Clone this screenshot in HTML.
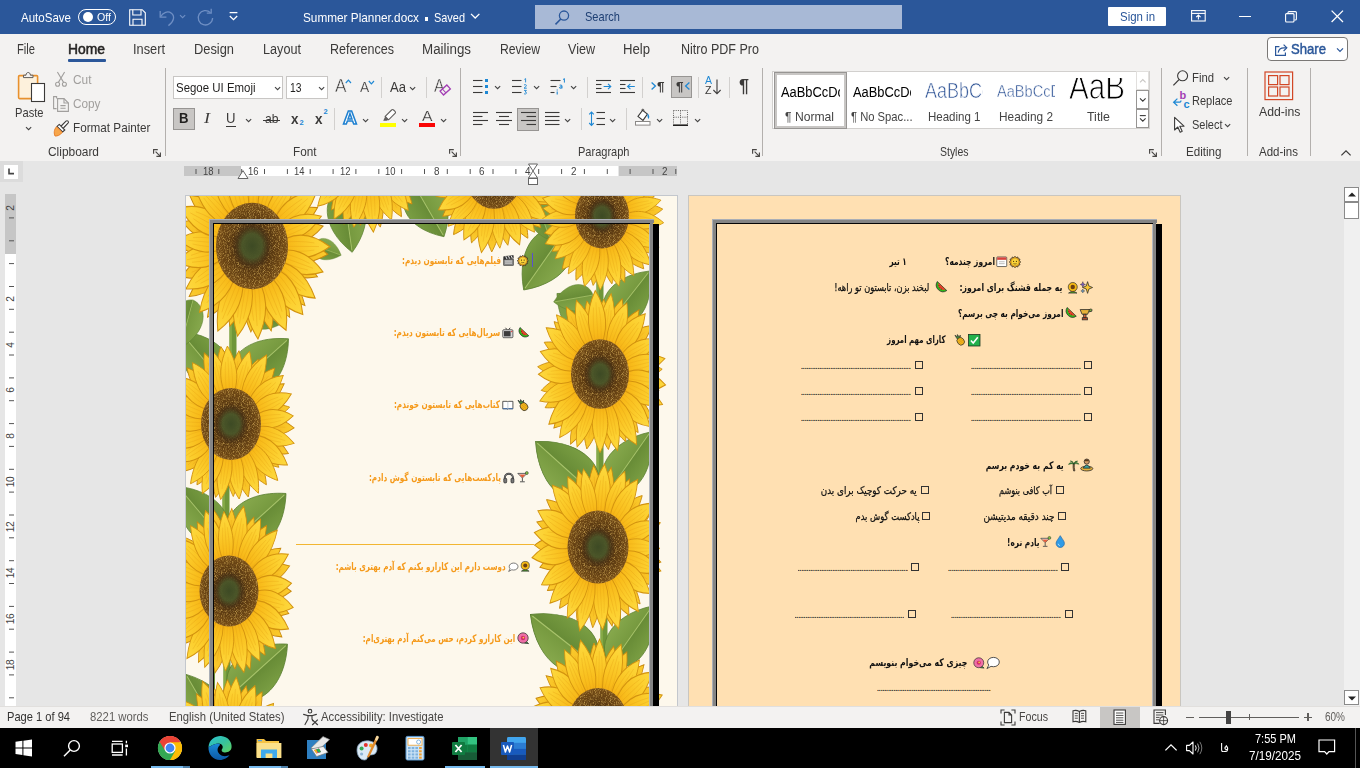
<!DOCTYPE html>
<html lang="en"><head><meta charset="utf-8"><title>Summer Planner.docx - Word</title>
<style>
html,body{margin:0;padding:0;background:#e6e6e6;}
body{width:1360px;height:768px;overflow:hidden;position:relative;font-family:"Liberation Sans","DejaVu Sans",sans-serif;}
.b{position:absolute;box-sizing:border-box;display:block;}
.t{position:absolute;white-space:nowrap;display:block;}
svg{overflow:visible}
</style></head>
<body>
<div class="b" style="left:0px;top:161px;width:1360px;height:545px;background:#e6e6e6;"></div>
<div class="b" style="left:0px;top:160px;width:1360px;height:1px;background:#d6d4d2;"></div>
<div class="b" style="left:0px;top:161px;width:23px;height:21px;background:#dcdcdc;"></div>
<div class="b" style="left:4px;top:165px;width:14px;height:13.5px;background:#fff;"></div>
<svg class="b" style="left:7px;top:168px;" width="8" height="8" viewBox="0 0 8 8"><path d="M2 0.6 V5.6 H7" fill="none" stroke="#444" stroke-width="1.6"/></svg>
<div class="b" style="left:184px;top:166px;width:57px;height:10px;background:#c6c6c6;"></div>
<div class="b" style="left:241px;top:166px;width:376.5px;height:10px;background:#fff;"></div>
<div class="b" style="left:619px;top:166px;width:58px;height:10px;background:#c6c6c6;"></div>
<span id="t1" class="t" style="top:164.9px;font-size:10.2px;line-height:14px;color:#444;left:202.5px;transform:scaleX(0.9256);transform-origin:left center;">18</span>
<span id="t2" class="t" style="top:164.9px;font-size:10.2px;line-height:14px;color:#444;left:248.2px;transform:scaleX(0.9256);transform-origin:left center;">16</span>
<span id="t3" class="t" style="top:164.9px;font-size:10.2px;line-height:14px;color:#444;left:293.9px;transform:scaleX(0.9256);transform-origin:left center;">14</span>
<span id="t4" class="t" style="top:164.9px;font-size:10.2px;line-height:14px;color:#444;left:339.6px;transform:scaleX(0.9256);transform-origin:left center;">12</span>
<span id="t5" class="t" style="top:164.9px;font-size:10.2px;line-height:14px;color:#444;left:385.3px;transform:scaleX(0.9256);transform-origin:left center;">10</span>
<span id="t6" class="t" style="top:164.9px;font-size:10.2px;line-height:14px;color:#444;left:433.5px;transform:scaleX(0.9697);transform-origin:left center;">8</span>
<span id="t7" class="t" style="top:164.9px;font-size:10.2px;line-height:14px;color:#444;left:479.2px;transform:scaleX(0.9697);transform-origin:left center;">6</span>
<span id="t8" class="t" style="top:164.9px;font-size:10.2px;line-height:14px;color:#444;left:524.9px;transform:scaleX(0.9697);transform-origin:left center;">4</span>
<span id="t9" class="t" style="top:164.9px;font-size:10.2px;line-height:14px;color:#444;left:570.5px;transform:scaleX(0.9697);transform-origin:left center;">2</span>
<span id="t10" class="t" style="top:164.9px;font-size:10.2px;line-height:14px;color:#444;left:662.0px;transform:scaleX(0.9697);transform-origin:left center;">2</span>
<svg class="b" style="left:184px;top:166px;" width="493" height="10" viewBox="0 0 493 10"><path d="M491.8 3 V8" stroke="#555" stroke-width="1"/><path d="M469.0 3 V8" stroke="#555" stroke-width="1"/><path d="M446.1 3 V8" stroke="#555" stroke-width="1"/><path d="M423.3 3 V8" stroke="#555" stroke-width="1"/><path d="M400.4 3 V8" stroke="#555" stroke-width="1"/><path d="M377.6 3 V8" stroke="#555" stroke-width="1"/><path d="M354.7 3 V8" stroke="#555" stroke-width="1"/><path d="M331.9 3 V8" stroke="#555" stroke-width="1"/><path d="M309.0 3 V8" stroke="#555" stroke-width="1"/><path d="M286.2 3 V8" stroke="#555" stroke-width="1"/><path d="M263.3 3 V8" stroke="#555" stroke-width="1"/><path d="M240.5 3 V8" stroke="#555" stroke-width="1"/><path d="M217.6 3 V8" stroke="#555" stroke-width="1"/><path d="M194.8 3 V8" stroke="#555" stroke-width="1"/><path d="M171.9 3 V8" stroke="#555" stroke-width="1"/><path d="M149.1 3 V8" stroke="#555" stroke-width="1"/><path d="M126.2 3 V8" stroke="#555" stroke-width="1"/><path d="M103.4 3 V8" stroke="#555" stroke-width="1"/><path d="M80.5 3 V8" stroke="#555" stroke-width="1"/><path d="M57.7 3 V8" stroke="#555" stroke-width="1"/><path d="M34.8 3 V8" stroke="#555" stroke-width="1"/><path d="M12.0 3 V8" stroke="#555" stroke-width="1"/></svg>
<svg class="b" style="left:236.5px;top:169px;" width="12" height="11" viewBox="0 0 12 11"><path d="M1 9.5 L6 1.6 L11 9.5 Z" fill="#fff" stroke="#666" stroke-width="1"/></svg>
<svg class="b" style="left:526.5px;top:163px;" width="12" height="24" viewBox="0 0 12 24"><path d="M1.5 1 H10.5 L6 8 Z" fill="#fff" stroke="#666" stroke-width="1"/><path d="M1.5 15 L6 8 L10.5 15 Z" fill="#fff" stroke="#666" stroke-width="1"/><rect x="1.5" y="15.5" width="9" height="6" fill="#fff" stroke="#666" stroke-width="1"/></svg>
<div class="b" style="left:5px;top:194px;width:11px;height:60px;background:#c6c6c6;"></div>
<div class="b" style="left:5px;top:254px;width:11px;height:452px;background:#fff;"></div>
<span class="t" style="left:1.0px;top:200.5px;width:20px;height:14px;line-height:14px;font-size:10.2px;color:#444;text-align:center;transform:rotate(-90deg);letter-spacing:-0.4px">2</span>
<span class="t" style="left:1.0px;top:291.9px;width:20px;height:14px;line-height:14px;font-size:10.2px;color:#444;text-align:center;transform:rotate(-90deg);letter-spacing:-0.4px">2</span>
<span class="t" style="left:1.0px;top:337.6px;width:20px;height:14px;line-height:14px;font-size:10.2px;color:#444;text-align:center;transform:rotate(-90deg);letter-spacing:-0.4px">4</span>
<span class="t" style="left:1.0px;top:383.3px;width:20px;height:14px;line-height:14px;font-size:10.2px;color:#444;text-align:center;transform:rotate(-90deg);letter-spacing:-0.4px">6</span>
<span class="t" style="left:1.0px;top:429.0px;width:20px;height:14px;line-height:14px;font-size:10.2px;color:#444;text-align:center;transform:rotate(-90deg);letter-spacing:-0.4px">8</span>
<span class="t" style="left:1.0px;top:474.7px;width:20px;height:14px;line-height:14px;font-size:10.2px;color:#444;text-align:center;transform:rotate(-90deg);letter-spacing:-0.4px">10</span>
<span class="t" style="left:1.0px;top:520.4px;width:20px;height:14px;line-height:14px;font-size:10.2px;color:#444;text-align:center;transform:rotate(-90deg);letter-spacing:-0.4px">12</span>
<span class="t" style="left:1.0px;top:566.1px;width:20px;height:14px;line-height:14px;font-size:10.2px;color:#444;text-align:center;transform:rotate(-90deg);letter-spacing:-0.4px">14</span>
<span class="t" style="left:1.0px;top:611.8px;width:20px;height:14px;line-height:14px;font-size:10.2px;color:#444;text-align:center;transform:rotate(-90deg);letter-spacing:-0.4px">16</span>
<span class="t" style="left:1.0px;top:657.5px;width:20px;height:14px;line-height:14px;font-size:10.2px;color:#444;text-align:center;transform:rotate(-90deg);letter-spacing:-0.4px">18</span>
<svg class="b" style="left:6px;top:194px;" width="10" height="512" viewBox="0 0 10 512"><path d="M3 23.9 H8" stroke="#555" stroke-width="1"/><path d="M3 46.8 H8" stroke="#555" stroke-width="1"/><path d="M3 69.6 H8" stroke="#555" stroke-width="1"/><path d="M3 92.5 H8" stroke="#555" stroke-width="1"/><path d="M3 115.3 H8" stroke="#555" stroke-width="1"/><path d="M3 138.2 H8" stroke="#555" stroke-width="1"/><path d="M3 161.0 H8" stroke="#555" stroke-width="1"/><path d="M3 183.9 H8" stroke="#555" stroke-width="1"/><path d="M3 206.7 H8" stroke="#555" stroke-width="1"/><path d="M3 229.6 H8" stroke="#555" stroke-width="1"/><path d="M3 252.4 H8" stroke="#555" stroke-width="1"/><path d="M3 275.3 H8" stroke="#555" stroke-width="1"/><path d="M3 298.1 H8" stroke="#555" stroke-width="1"/><path d="M3 321.0 H8" stroke="#555" stroke-width="1"/><path d="M3 343.8 H8" stroke="#555" stroke-width="1"/><path d="M3 366.7 H8" stroke="#555" stroke-width="1"/><path d="M3 389.5 H8" stroke="#555" stroke-width="1"/><path d="M3 412.4 H8" stroke="#555" stroke-width="1"/><path d="M3 435.2 H8" stroke="#555" stroke-width="1"/><path d="M3 458.1 H8" stroke="#555" stroke-width="1"/><path d="M3 480.9 H8" stroke="#555" stroke-width="1"/><path d="M3 503.8 H8" stroke="#555" stroke-width="1"/></svg>
<div class="b" style="left:1344px;top:187px;width:16px;height:519px;background:#f0f0f0;"></div>
<div class="b" style="left:1344px;top:187px;width:15px;height:14.5px;background:#fff;border:1px solid #8a8a8a;"></div>
<svg class="b" style="left:1346.5px;top:191px;" width="10" height="7" viewBox="0 0 10 7"><path d="M1 5.4 L5 1.4 L9 5.4 Z" fill="#222"/></svg>
<div class="b" style="left:1344px;top:201.5px;width:15px;height:17px;background:#fff;border:1px solid #8a8a8a;"></div>
<div class="b" style="left:1344px;top:690px;width:15px;height:14.5px;background:#fff;border:1px solid #8a8a8a;"></div>
<svg class="b" style="left:1346.5px;top:694.5px;" width="10" height="7" viewBox="0 0 10 7"><path d="M1 1.4 L5 5.4 L9 1.4 Z" fill="#222"/></svg>
<svg class="b" style="left:185px;top:195px;overflow:hidden" width="493" height="511" viewBox="0 0 493 511"><defs><linearGradient id="pg" x1="0" y1="1" x2="0" y2="0"><stop offset="0" stop-color="#f0a010"/><stop offset="0.3" stop-color="#f8bb1a"/><stop offset="0.7" stop-color="#fccf2e"/><stop offset="1" stop-color="#fdd940"/></linearGradient><linearGradient id="pb" x1="0" y1="1" x2="0" y2="0"><stop offset="0" stop-color="#ea9c10"/><stop offset="0.5" stop-color="#f5b81c"/><stop offset="1" stop-color="#fbcc2e"/></linearGradient><radialGradient id="dk" cx="0.5" cy="0.5" r="0.5"><stop offset="0" stop-color="#452e10"/><stop offset="0.5" stop-color="#553611"/><stop offset="0.85" stop-color="#6b4514"/><stop offset="1" stop-color="#7a5018"/></radialGradient><linearGradient id="lf" x1="0" y1="0" x2="1" y2="0"><stop offset="0" stop-color="#86a84c"/><stop offset="0.5" stop-color="#76993f"/><stop offset="0.5" stop-color="#678b36"/><stop offset="1" stop-color="#7a9e43"/></linearGradient><g id="pt"><path d="M0 -0.28 C0.06 -0.36 0.11 -0.5 0.11 -0.63 C0.11 -0.78 0.04 -0.93 0 -1 C-0.04 -0.93 -0.11 -0.78 -0.11 -0.63 C-0.11 -0.5 -0.06 -0.36 0 -0.28 Z"/><path d="M0 -0.3 V-0.86 M0.035 -0.34 Q0.06 -0.6 0.035 -0.8 M-0.035 -0.34 Q-0.06 -0.6 -0.035 -0.8" fill="none" stroke="#e39d12" stroke-width="0.008" opacity="0.45"/></g><radialGradient id="dc" cx="0.5" cy="0.5" r="0.5"><stop offset="0" stop-color="#3d4a24"/><stop offset="0.5" stop-color="#4a5629" stop-opacity="0.95"/><stop offset="0.8" stop-color="#453015" stop-opacity="0.7"/><stop offset="1" stop-color="#453015" stop-opacity="0"/></radialGradient><filter id="sp" x="0" y="0" width="1" height="1"><feTurbulence type="fractalNoise" baseFrequency="1.2" numOctaves="2" seed="7" result="n"/><feColorMatrix in="n" type="matrix" values="0 0 0 0 0.66  0 0 0 0 0.42  0 0 0 0 0.10  0 0 0 2.2 -1.0"/><feComposite in2="SourceGraphic" operator="in"/></filter><path id="lfp" d="M0 0 C0.5 -0.06 0.66 -0.55 0 -1 C-0.66 -0.55 -0.5 -0.06 0 0 Z"/></defs><rect width="493" height="511" fill="#fdf8ec"/><rect x="44.5" y="110" width="7" height="70" fill="#6f9639"/><rect x="44.5" y="110" width="2.4" height="70" fill="#86aa48"/><rect x="37.5" y="280" width="7" height="60" fill="#6f9639"/><rect x="37.5" y="280" width="2.4" height="60" fill="#86aa48"/><rect x="38.5" y="440" width="7" height="80" fill="#6f9639"/><rect x="38.5" y="440" width="2.4" height="80" fill="#86aa48"/><rect x="411.5" y="60" width="7" height="70" fill="#6f9639"/><rect x="411.5" y="60" width="2.4" height="70" fill="#86aa48"/><rect x="411.5" y="230" width="7" height="70" fill="#6f9639"/><rect x="411.5" y="230" width="2.4" height="70" fill="#86aa48"/><rect x="415.5" y="400" width="7" height="70" fill="#6f9639"/><rect x="415.5" y="400" width="2.4" height="70" fill="#86aa48"/><rect x="430.0" y="220" width="4" height="80" fill="#6f9639"/><rect x="430.0" y="220" width="1.4" height="80" fill="#86aa48"/><rect x="432.0" y="400" width="4" height="70" fill="#6f9639"/><rect x="432.0" y="400" width="1.4" height="70" fill="#86aa48"/><rect x="26.0" y="440" width="4" height="80" fill="#6f9639"/><rect x="26.0" y="440" width="1.4" height="80" fill="#86aa48"/><g transform="translate(158 -8) rotate(172) scale(44 66)"><use href="#lfp" fill="url(#lf)" stroke="#5a7f30" stroke-width="0.012"/><path d="M0 0 V-0.97" stroke="#a9c46c" stroke-width="0.02" fill="none"/></g><g transform="translate(228 -12) rotate(150) scale(48 62)"><use href="#lfp" fill="url(#lf)" stroke="#5a7f30" stroke-width="0.012"/><path d="M0 0 V-0.97" stroke="#a9c46c" stroke-width="0.02" fill="none"/></g><g transform="translate(128 50) rotate(110) scale(24 30)"><use href="#lfp" fill="url(#lf)" stroke="#5a7f30" stroke-width="0.012"/><path d="M0 0 V-0.97" stroke="#a9c46c" stroke-width="0.02" fill="none"/></g><g transform="translate(380 36) rotate(215) scale(50 72)"><use href="#lfp" fill="url(#lf)" stroke="#5a7f30" stroke-width="0.012"/><path d="M0 0 V-0.97" stroke="#a9c46c" stroke-width="0.02" fill="none"/></g><g transform="translate(340 2) rotate(200) scale(28 34)"><use href="#lfp" fill="url(#lf)" stroke="#5a7f30" stroke-width="0.012"/><path d="M0 0 V-0.97" stroke="#a9c46c" stroke-width="0.02" fill="none"/></g><g transform="translate(352 8) rotate(160) scale(30 40)"><use href="#lfp" fill="url(#lf)" stroke="#5a7f30" stroke-width="0.012"/><path d="M0 0 V-0.97" stroke="#a9c46c" stroke-width="0.02" fill="none"/></g><g transform="translate(418 140) rotate(-48) scale(44 62)"><use href="#lfp" fill="url(#lf)" stroke="#5a7f30" stroke-width="0.012"/><path d="M0 0 V-0.97" stroke="#a9c46c" stroke-width="0.02" fill="none"/></g><g transform="translate(424 128) rotate(38) scale(46 66)"><use href="#lfp" fill="url(#lf)" stroke="#5a7f30" stroke-width="0.012"/><path d="M0 0 V-0.97" stroke="#a9c46c" stroke-width="0.02" fill="none"/></g><g transform="translate(408 100) rotate(-100) scale(30 40)"><use href="#lfp" fill="url(#lf)" stroke="#5a7f30" stroke-width="0.012"/><path d="M0 0 V-0.97" stroke="#a9c46c" stroke-width="0.02" fill="none"/></g><g transform="translate(50 192) rotate(48) scale(52 72)"><use href="#lfp" fill="url(#lf)" stroke="#5a7f30" stroke-width="0.012"/><path d="M0 0 V-0.97" stroke="#a9c46c" stroke-width="0.02" fill="none"/></g><g transform="translate(40 190) rotate(-40) scale(48 70)"><use href="#lfp" fill="url(#lf)" stroke="#5a7f30" stroke-width="0.012"/><path d="M0 0 V-0.97" stroke="#a9c46c" stroke-width="0.02" fill="none"/></g><g transform="translate(60 120) rotate(100) scale(26 40)"><use href="#lfp" fill="url(#lf)" stroke="#5a7f30" stroke-width="0.012"/><path d="M0 0 V-0.97" stroke="#a9c46c" stroke-width="0.02" fill="none"/></g><g transform="translate(8 105) rotate(195) scale(34 50)"><use href="#lfp" fill="url(#lf)" stroke="#5a7f30" stroke-width="0.012"/><path d="M0 0 V-0.97" stroke="#a9c46c" stroke-width="0.02" fill="none"/></g><g transform="translate(46 348) rotate(48) scale(52 74)"><use href="#lfp" fill="url(#lf)" stroke="#5a7f30" stroke-width="0.012"/><path d="M0 0 V-0.97" stroke="#a9c46c" stroke-width="0.02" fill="none"/></g><g transform="translate(38 345) rotate(-40) scale(46 70)"><use href="#lfp" fill="url(#lf)" stroke="#5a7f30" stroke-width="0.012"/><path d="M0 0 V-0.97" stroke="#a9c46c" stroke-width="0.02" fill="none"/></g><g transform="translate(46 500) rotate(48) scale(52 76)"><use href="#lfp" fill="url(#lf)" stroke="#5a7f30" stroke-width="0.012"/><path d="M0 0 V-0.97" stroke="#a9c46c" stroke-width="0.02" fill="none"/></g><g transform="translate(36 540) rotate(-30) scale(46 70)"><use href="#lfp" fill="url(#lf)" stroke="#5a7f30" stroke-width="0.012"/><path d="M0 0 V-0.97" stroke="#a9c46c" stroke-width="0.02" fill="none"/></g><g transform="translate(410 300) rotate(-48) scale(54 80)"><use href="#lfp" fill="url(#lf)" stroke="#5a7f30" stroke-width="0.012"/><path d="M0 0 V-0.97" stroke="#a9c46c" stroke-width="0.02" fill="none"/></g><g transform="translate(424 296) rotate(35) scale(46 72)"><use href="#lfp" fill="url(#lf)" stroke="#5a7f30" stroke-width="0.012"/><path d="M0 0 V-0.97" stroke="#a9c46c" stroke-width="0.02" fill="none"/></g><g transform="translate(410 470) rotate(-52) scale(56 82)"><use href="#lfp" fill="url(#lf)" stroke="#5a7f30" stroke-width="0.012"/><path d="M0 0 V-0.97" stroke="#a9c46c" stroke-width="0.02" fill="none"/></g><g transform="translate(426 470) rotate(35) scale(46 72)"><use href="#lfp" fill="url(#lf)" stroke="#5a7f30" stroke-width="0.012"/><path d="M0 0 V-0.97" stroke="#a9c46c" stroke-width="0.02" fill="none"/></g><g transform="translate(182 -43)"><g transform="scale(1 1.2)"><use href="#pt" fill="url(#pb)" stroke="#c98a0e" stroke-width="0.012" transform="rotate(12.8) scale(63.8 61.4)"/><use href="#pt" fill="url(#pb)" stroke="#c98a0e" stroke-width="0.012" transform="rotate(30.4) scale(56.9 59.7)"/><use href="#pt" fill="url(#pb)" stroke="#c98a0e" stroke-width="0.012" transform="rotate(48.6) scale(59.9 60.8)"/><use href="#pt" fill="url(#pb)" stroke="#c98a0e" stroke-width="0.012" transform="rotate(66.5) scale(66.6 61.9)"/><use href="#pt" fill="url(#pb)" stroke="#c98a0e" stroke-width="0.012" transform="rotate(81.1) scale(61.1 62.8)"/><use href="#pt" fill="url(#pb)" stroke="#c98a0e" stroke-width="0.012" transform="rotate(99.0) scale(65.8 64.0)"/><use href="#pt" fill="url(#pb)" stroke="#c98a0e" stroke-width="0.012" transform="rotate(116.7) scale(60.4 62.9)"/><use href="#pt" fill="url(#pb)" stroke="#c98a0e" stroke-width="0.012" transform="rotate(133.9) scale(62.2 62.5)"/><use href="#pt" fill="url(#pb)" stroke="#c98a0e" stroke-width="0.012" transform="rotate(147.4) scale(65.3 64.0)"/><use href="#pt" fill="url(#pb)" stroke="#c98a0e" stroke-width="0.012" transform="rotate(168.0) scale(67.7 64.0)"/><use href="#pt" fill="url(#pb)" stroke="#c98a0e" stroke-width="0.012" transform="rotate(186.2) scale(65.8 61.5)"/><use href="#pt" fill="url(#pb)" stroke="#c98a0e" stroke-width="0.012" transform="rotate(200.9) scale(69.6 64.3)"/><use href="#pt" fill="url(#pb)" stroke="#c98a0e" stroke-width="0.012" transform="rotate(216.3) scale(59.1 60.1)"/><use href="#pt" fill="url(#pb)" stroke="#c98a0e" stroke-width="0.012" transform="rotate(237.8) scale(64.4 61.7)"/><use href="#pt" fill="url(#pb)" stroke="#c98a0e" stroke-width="0.012" transform="rotate(251.6) scale(62.6 62.1)"/><use href="#pt" fill="url(#pb)" stroke="#c98a0e" stroke-width="0.012" transform="rotate(269.0) scale(64.8 62.5)"/><use href="#pt" fill="url(#pb)" stroke="#c98a0e" stroke-width="0.012" transform="rotate(288.9) scale(68.6 63.0)"/><use href="#pt" fill="url(#pb)" stroke="#c98a0e" stroke-width="0.012" transform="rotate(305.8) scale(67.9 64.6)"/><use href="#pt" fill="url(#pb)" stroke="#c98a0e" stroke-width="0.012" transform="rotate(319.5) scale(70.0 63.9)"/><use href="#pt" fill="url(#pb)" stroke="#c98a0e" stroke-width="0.012" transform="rotate(340.4) scale(66.0 62.4)"/><use href="#pt" fill="url(#pb)" stroke="#c98a0e" stroke-width="0.012" transform="rotate(354.0) scale(66.1 63.8)"/><use href="#pt" fill="url(#pg)" stroke="#d3930f" stroke-width="0.012" transform="rotate(3.0) scale(71.2 61.8)"/><use href="#pt" fill="url(#pg)" stroke="#d3930f" stroke-width="0.012" transform="rotate(23.6) scale(70.8 61.9)"/><use href="#pt" fill="url(#pg)" stroke="#d3930f" stroke-width="0.012" transform="rotate(37.9) scale(65.6 62.3)"/><use href="#pt" fill="url(#pg)" stroke="#d3930f" stroke-width="0.012" transform="rotate(56.8) scale(67.1 66.6)"/><use href="#pt" fill="url(#pg)" stroke="#d3930f" stroke-width="0.012" transform="rotate(73.2) scale(69.6 61.6)"/><use href="#pt" fill="url(#pg)" stroke="#d3930f" stroke-width="0.012" transform="rotate(88.9) scale(78.4 66.6)"/><use href="#pt" fill="url(#pg)" stroke="#d3930f" stroke-width="0.012" transform="rotate(106.9) scale(71.1 67.3)"/><use href="#pt" fill="url(#pg)" stroke="#d3930f" stroke-width="0.012" transform="rotate(121.9) scale(65.3 64.9)"/><use href="#pt" fill="url(#pg)" stroke="#d3930f" stroke-width="0.012" transform="rotate(139.7) scale(70.8 63.8)"/><use href="#pt" fill="url(#pg)" stroke="#d3930f" stroke-width="0.012" transform="rotate(156.6) scale(71.3 61.6)"/><use href="#pt" fill="url(#pg)" stroke="#d3930f" stroke-width="0.012" transform="rotate(174.5) scale(77.9 67.1)"/><use href="#pt" fill="url(#pg)" stroke="#d3930f" stroke-width="0.012" transform="rotate(192.0) scale(70.1 64.1)"/><use href="#pt" fill="url(#pg)" stroke="#d3930f" stroke-width="0.012" transform="rotate(210.5) scale(71.5 64.9)"/><use href="#pt" fill="url(#pg)" stroke="#d3930f" stroke-width="0.012" transform="rotate(227.5) scale(73.1 67.0)"/><use href="#pt" fill="url(#pg)" stroke="#d3930f" stroke-width="0.012" transform="rotate(243.7) scale(68.5 65.7)"/><use href="#pt" fill="url(#pg)" stroke="#d3930f" stroke-width="0.012" transform="rotate(260.2) scale(73.5 67.2)"/><use href="#pt" fill="url(#pg)" stroke="#d3930f" stroke-width="0.012" transform="rotate(278.6) scale(66.0 61.4)"/><use href="#pt" fill="url(#pg)" stroke="#d3930f" stroke-width="0.012" transform="rotate(295.9) scale(68.3 61.5)"/><use href="#pt" fill="url(#pg)" stroke="#d3930f" stroke-width="0.012" transform="rotate(313.3) scale(68.7 61.7)"/><use href="#pt" fill="url(#pg)" stroke="#d3930f" stroke-width="0.012" transform="rotate(329.6) scale(69.6 65.4)"/><use href="#pt" fill="url(#pg)" stroke="#d3930f" stroke-width="0.012" transform="rotate(347.9) scale(66.0 65.8)"/></g><g transform="scale(1 1.2)"><circle r="28" fill="url(#dk)"/><circle r="28" fill="#000" filter="url(#sp)"/><circle r="15.7" fill="url(#dc)"/></g></g><g transform="translate(309 -21)"><g transform="scale(1 1.2)"><use href="#pt" fill="url(#pb)" stroke="#c98a0e" stroke-width="0.012" transform="rotate(10.6) scale(60.5 62.1)"/><use href="#pt" fill="url(#pb)" stroke="#c98a0e" stroke-width="0.012" transform="rotate(27.6) scale(67.6 62.2)"/><use href="#pt" fill="url(#pb)" stroke="#c98a0e" stroke-width="0.012" transform="rotate(48.4) scale(63.0 64.1)"/><use href="#pt" fill="url(#pb)" stroke="#c98a0e" stroke-width="0.012" transform="rotate(64.2) scale(60.0 61.5)"/><use href="#pt" fill="url(#pb)" stroke="#c98a0e" stroke-width="0.012" transform="rotate(79.2) scale(66.6 61.2)"/><use href="#pt" fill="url(#pb)" stroke="#c98a0e" stroke-width="0.012" transform="rotate(99.9) scale(68.8 64.3)"/><use href="#pt" fill="url(#pb)" stroke="#c98a0e" stroke-width="0.012" transform="rotate(113.9) scale(64.4 61.7)"/><use href="#pt" fill="url(#pb)" stroke="#c98a0e" stroke-width="0.012" transform="rotate(133.7) scale(69.9 64.6)"/><use href="#pt" fill="url(#pb)" stroke="#c98a0e" stroke-width="0.012" transform="rotate(147.7) scale(66.5 63.3)"/><use href="#pt" fill="url(#pb)" stroke="#c98a0e" stroke-width="0.012" transform="rotate(166.9) scale(62.3 61.0)"/><use href="#pt" fill="url(#pb)" stroke="#c98a0e" stroke-width="0.012" transform="rotate(182.0) scale(70.2 65.0)"/><use href="#pt" fill="url(#pb)" stroke="#c98a0e" stroke-width="0.012" transform="rotate(201.4) scale(67.0 61.6)"/><use href="#pt" fill="url(#pb)" stroke="#c98a0e" stroke-width="0.012" transform="rotate(218.7) scale(69.7 64.7)"/><use href="#pt" fill="url(#pb)" stroke="#c98a0e" stroke-width="0.012" transform="rotate(235.5) scale(64.7 62.2)"/><use href="#pt" fill="url(#pb)" stroke="#c98a0e" stroke-width="0.012" transform="rotate(252.2) scale(60.6 60.9)"/><use href="#pt" fill="url(#pb)" stroke="#c98a0e" stroke-width="0.012" transform="rotate(271.3) scale(57.7 60.3)"/><use href="#pt" fill="url(#pb)" stroke="#c98a0e" stroke-width="0.012" transform="rotate(287.5) scale(63.4 61.5)"/><use href="#pt" fill="url(#pb)" stroke="#c98a0e" stroke-width="0.012" transform="rotate(303.9) scale(68.0 61.9)"/><use href="#pt" fill="url(#pb)" stroke="#c98a0e" stroke-width="0.012" transform="rotate(319.6) scale(61.0 62.2)"/><use href="#pt" fill="url(#pb)" stroke="#c98a0e" stroke-width="0.012" transform="rotate(339.0) scale(61.7 61.5)"/><use href="#pt" fill="url(#pb)" stroke="#c98a0e" stroke-width="0.012" transform="rotate(356.7) scale(63.8 61.7)"/><use href="#pt" fill="url(#pg)" stroke="#d3930f" stroke-width="0.012" transform="rotate(6.0) scale(63.3 62.6)"/><use href="#pt" fill="url(#pg)" stroke="#d3930f" stroke-width="0.012" transform="rotate(19.8) scale(74.0 66.6)"/><use href="#pt" fill="url(#pg)" stroke="#d3930f" stroke-width="0.012" transform="rotate(37.0) scale(66.1 64.0)"/><use href="#pt" fill="url(#pg)" stroke="#d3930f" stroke-width="0.012" transform="rotate(55.2) scale(70.1 62.3)"/><use href="#pt" fill="url(#pg)" stroke="#d3930f" stroke-width="0.012" transform="rotate(74.6) scale(76.7 67.8)"/><use href="#pt" fill="url(#pg)" stroke="#d3930f" stroke-width="0.012" transform="rotate(92.0) scale(65.4 62.1)"/><use href="#pt" fill="url(#pg)" stroke="#d3930f" stroke-width="0.012" transform="rotate(109.2) scale(71.6 66.7)"/><use href="#pt" fill="url(#pg)" stroke="#d3930f" stroke-width="0.012" transform="rotate(126.2) scale(75.4 65.8)"/><use href="#pt" fill="url(#pg)" stroke="#d3930f" stroke-width="0.012" transform="rotate(140.1) scale(68.2 63.2)"/><use href="#pt" fill="url(#pg)" stroke="#d3930f" stroke-width="0.012" transform="rotate(156.5) scale(75.5 64.3)"/><use href="#pt" fill="url(#pg)" stroke="#d3930f" stroke-width="0.012" transform="rotate(174.6) scale(62.6 62.1)"/><use href="#pt" fill="url(#pg)" stroke="#d3930f" stroke-width="0.012" transform="rotate(190.9) scale(71.1 66.7)"/><use href="#pt" fill="url(#pg)" stroke="#d3930f" stroke-width="0.012" transform="rotate(208.7) scale(73.7 62.6)"/><use href="#pt" fill="url(#pg)" stroke="#d3930f" stroke-width="0.012" transform="rotate(226.5) scale(64.0 63.3)"/><use href="#pt" fill="url(#pg)" stroke="#d3930f" stroke-width="0.012" transform="rotate(241.8) scale(70.7 63.0)"/><use href="#pt" fill="url(#pg)" stroke="#d3930f" stroke-width="0.012" transform="rotate(259.4) scale(67.8 62.3)"/><use href="#pt" fill="url(#pg)" stroke="#d3930f" stroke-width="0.012" transform="rotate(277.0) scale(69.5 68.0)"/><use href="#pt" fill="url(#pg)" stroke="#d3930f" stroke-width="0.012" transform="rotate(295.6) scale(71.6 66.7)"/><use href="#pt" fill="url(#pg)" stroke="#d3930f" stroke-width="0.012" transform="rotate(315.0) scale(67.7 64.9)"/><use href="#pt" fill="url(#pg)" stroke="#d3930f" stroke-width="0.012" transform="rotate(329.3) scale(67.0 62.3)"/><use href="#pt" fill="url(#pg)" stroke="#d3930f" stroke-width="0.012" transform="rotate(345.6) scale(77.4 67.4)"/></g><g transform="scale(1 1.2)"><circle r="29" fill="url(#dk)"/><circle r="29" fill="#000" filter="url(#sp)"/><circle r="16.2" fill="url(#dc)"/></g></g><g transform="translate(45 566)"><g transform="scale(1 1.3)"><use href="#pt" fill="url(#pb)" stroke="#c98a0e" stroke-width="0.012" transform="rotate(15.8) scale(64.9 60.1)"/><use href="#pt" fill="url(#pb)" stroke="#c98a0e" stroke-width="0.012" transform="rotate(31.1) scale(67.3 62.1)"/><use href="#pt" fill="url(#pb)" stroke="#c98a0e" stroke-width="0.012" transform="rotate(48.6) scale(65.0 62.3)"/><use href="#pt" fill="url(#pb)" stroke="#c98a0e" stroke-width="0.012" transform="rotate(65.6) scale(64.8 61.4)"/><use href="#pt" fill="url(#pb)" stroke="#c98a0e" stroke-width="0.012" transform="rotate(84.8) scale(61.6 63.2)"/><use href="#pt" fill="url(#pb)" stroke="#c98a0e" stroke-width="0.012" transform="rotate(100.8) scale(61.5 60.0)"/><use href="#pt" fill="url(#pb)" stroke="#c98a0e" stroke-width="0.012" transform="rotate(121.4) scale(66.7 62.5)"/><use href="#pt" fill="url(#pb)" stroke="#c98a0e" stroke-width="0.012" transform="rotate(135.9) scale(61.1 63.3)"/><use href="#pt" fill="url(#pb)" stroke="#c98a0e" stroke-width="0.012" transform="rotate(152.5) scale(66.7 63.0)"/><use href="#pt" fill="url(#pb)" stroke="#c98a0e" stroke-width="0.012" transform="rotate(170.3) scale(59.3 59.9)"/><use href="#pt" fill="url(#pb)" stroke="#c98a0e" stroke-width="0.012" transform="rotate(186.4) scale(65.2 60.9)"/><use href="#pt" fill="url(#pb)" stroke="#c98a0e" stroke-width="0.012" transform="rotate(203.5) scale(69.3 64.1)"/><use href="#pt" fill="url(#pb)" stroke="#c98a0e" stroke-width="0.012" transform="rotate(219.9) scale(62.9 61.4)"/><use href="#pt" fill="url(#pb)" stroke="#c98a0e" stroke-width="0.012" transform="rotate(236.9) scale(66.9 61.6)"/><use href="#pt" fill="url(#pb)" stroke="#c98a0e" stroke-width="0.012" transform="rotate(254.5) scale(60.6 62.6)"/><use href="#pt" fill="url(#pb)" stroke="#c98a0e" stroke-width="0.012" transform="rotate(274.0) scale(62.9 64.1)"/><use href="#pt" fill="url(#pb)" stroke="#c98a0e" stroke-width="0.012" transform="rotate(288.3) scale(61.7 59.8)"/><use href="#pt" fill="url(#pb)" stroke="#c98a0e" stroke-width="0.012" transform="rotate(305.5) scale(61.3 59.8)"/><use href="#pt" fill="url(#pb)" stroke="#c98a0e" stroke-width="0.012" transform="rotate(327.1) scale(62.2 61.6)"/><use href="#pt" fill="url(#pb)" stroke="#c98a0e" stroke-width="0.012" transform="rotate(342.9) scale(62.1 59.9)"/><use href="#pt" fill="url(#pb)" stroke="#c98a0e" stroke-width="0.012" transform="rotate(357.7) scale(68.5 62.6)"/><use href="#pt" fill="url(#pg)" stroke="#d3930f" stroke-width="0.012" transform="rotate(5.6) scale(71.7 64.7)"/><use href="#pt" fill="url(#pg)" stroke="#d3930f" stroke-width="0.012" transform="rotate(23.3) scale(74.3 63.0)"/><use href="#pt" fill="url(#pg)" stroke="#d3930f" stroke-width="0.012" transform="rotate(44.6) scale(70.0 62.1)"/><use href="#pt" fill="url(#pg)" stroke="#d3930f" stroke-width="0.012" transform="rotate(61.6) scale(69.7 62.8)"/><use href="#pt" fill="url(#pg)" stroke="#d3930f" stroke-width="0.012" transform="rotate(74.2) scale(71.3 63.6)"/><use href="#pt" fill="url(#pg)" stroke="#d3930f" stroke-width="0.012" transform="rotate(94.0) scale(67.0 66.0)"/><use href="#pt" fill="url(#pg)" stroke="#d3930f" stroke-width="0.012" transform="rotate(110.0) scale(73.5 66.5)"/><use href="#pt" fill="url(#pg)" stroke="#d3930f" stroke-width="0.012" transform="rotate(127.6) scale(75.1 63.8)"/><use href="#pt" fill="url(#pg)" stroke="#d3930f" stroke-width="0.012" transform="rotate(145.4) scale(70.3 61.5)"/><use href="#pt" fill="url(#pg)" stroke="#d3930f" stroke-width="0.012" transform="rotate(161.3) scale(66.4 64.0)"/><use href="#pt" fill="url(#pg)" stroke="#d3930f" stroke-width="0.012" transform="rotate(179.0) scale(64.3 63.3)"/><use href="#pt" fill="url(#pg)" stroke="#d3930f" stroke-width="0.012" transform="rotate(197.1) scale(70.7 62.0)"/><use href="#pt" fill="url(#pg)" stroke="#d3930f" stroke-width="0.012" transform="rotate(211.2) scale(75.6 66.0)"/><use href="#pt" fill="url(#pg)" stroke="#d3930f" stroke-width="0.012" transform="rotate(230.7) scale(68.5 65.6)"/><use href="#pt" fill="url(#pg)" stroke="#d3930f" stroke-width="0.012" transform="rotate(249.1) scale(66.6 63.9)"/><use href="#pt" fill="url(#pg)" stroke="#d3930f" stroke-width="0.012" transform="rotate(267.3) scale(68.0 63.8)"/><use href="#pt" fill="url(#pg)" stroke="#d3930f" stroke-width="0.012" transform="rotate(284.0) scale(71.2 63.6)"/><use href="#pt" fill="url(#pg)" stroke="#d3930f" stroke-width="0.012" transform="rotate(297.7) scale(69.5 66.4)"/><use href="#pt" fill="url(#pg)" stroke="#d3930f" stroke-width="0.012" transform="rotate(314.2) scale(69.3 67.2)"/><use href="#pt" fill="url(#pg)" stroke="#d3930f" stroke-width="0.012" transform="rotate(335.8) scale(74.6 67.2)"/><use href="#pt" fill="url(#pg)" stroke="#d3930f" stroke-width="0.012" transform="rotate(348.3) scale(64.1 61.7)"/></g><g transform="scale(1 1.2)"><circle r="30" fill="url(#dk)"/><circle r="30" fill="#000" filter="url(#sp)"/><circle r="16.8" fill="url(#dc)"/></g></g><g transform="translate(413 529)"><g transform="scale(1 1.3)"><use href="#pt" fill="url(#pb)" stroke="#c98a0e" stroke-width="0.012" transform="rotate(14.7) scale(65.3 61.9)"/><use href="#pt" fill="url(#pb)" stroke="#c98a0e" stroke-width="0.012" transform="rotate(27.5) scale(68.8 62.5)"/><use href="#pt" fill="url(#pb)" stroke="#c98a0e" stroke-width="0.012" transform="rotate(45.3) scale(65.9 64.7)"/><use href="#pt" fill="url(#pb)" stroke="#c98a0e" stroke-width="0.012" transform="rotate(63.6) scale(62.5 63.9)"/><use href="#pt" fill="url(#pb)" stroke="#c98a0e" stroke-width="0.012" transform="rotate(82.6) scale(60.8 61.7)"/><use href="#pt" fill="url(#pb)" stroke="#c98a0e" stroke-width="0.012" transform="rotate(95.7) scale(63.3 62.7)"/><use href="#pt" fill="url(#pb)" stroke="#c98a0e" stroke-width="0.012" transform="rotate(117.3) scale(61.2 63.3)"/><use href="#pt" fill="url(#pb)" stroke="#c98a0e" stroke-width="0.012" transform="rotate(131.2) scale(63.9 66.6)"/><use href="#pt" fill="url(#pb)" stroke="#c98a0e" stroke-width="0.012" transform="rotate(150.2) scale(66.4 63.3)"/><use href="#pt" fill="url(#pb)" stroke="#c98a0e" stroke-width="0.012" transform="rotate(165.9) scale(66.6 65.0)"/><use href="#pt" fill="url(#pb)" stroke="#c98a0e" stroke-width="0.012" transform="rotate(184.6) scale(68.6 66.1)"/><use href="#pt" fill="url(#pb)" stroke="#c98a0e" stroke-width="0.012" transform="rotate(199.2) scale(67.2 61.6)"/><use href="#pt" fill="url(#pb)" stroke="#c98a0e" stroke-width="0.012" transform="rotate(218.1) scale(68.0 62.3)"/><use href="#pt" fill="url(#pb)" stroke="#c98a0e" stroke-width="0.012" transform="rotate(235.7) scale(70.5 65.2)"/><use href="#pt" fill="url(#pb)" stroke="#c98a0e" stroke-width="0.012" transform="rotate(251.4) scale(68.3 63.1)"/><use href="#pt" fill="url(#pb)" stroke="#c98a0e" stroke-width="0.012" transform="rotate(267.7) scale(63.0 65.4)"/><use href="#pt" fill="url(#pb)" stroke="#c98a0e" stroke-width="0.012" transform="rotate(287.7) scale(71.0 65.0)"/><use href="#pt" fill="url(#pb)" stroke="#c98a0e" stroke-width="0.012" transform="rotate(305.6) scale(62.6 63.9)"/><use href="#pt" fill="url(#pb)" stroke="#c98a0e" stroke-width="0.012" transform="rotate(319.2) scale(65.8 64.1)"/><use href="#pt" fill="url(#pb)" stroke="#c98a0e" stroke-width="0.012" transform="rotate(336.0) scale(67.8 66.1)"/><use href="#pt" fill="url(#pb)" stroke="#c98a0e" stroke-width="0.012" transform="rotate(356.3) scale(61.6 62.4)"/><use href="#pt" fill="url(#pg)" stroke="#d3930f" stroke-width="0.012" transform="rotate(1.4) scale(68.5 65.3)"/><use href="#pt" fill="url(#pg)" stroke="#d3930f" stroke-width="0.012" transform="rotate(20.6) scale(75.4 65.5)"/><use href="#pt" fill="url(#pg)" stroke="#d3930f" stroke-width="0.012" transform="rotate(40.1) scale(68.9 64.3)"/><use href="#pt" fill="url(#pg)" stroke="#d3930f" stroke-width="0.012" transform="rotate(53.6) scale(79.1 67.3)"/><use href="#pt" fill="url(#pg)" stroke="#d3930f" stroke-width="0.012" transform="rotate(70.9) scale(71.6 67.9)"/><use href="#pt" fill="url(#pg)" stroke="#d3930f" stroke-width="0.012" transform="rotate(87.1) scale(72.1 67.9)"/><use href="#pt" fill="url(#pg)" stroke="#d3930f" stroke-width="0.012" transform="rotate(105.1) scale(68.7 65.9)"/><use href="#pt" fill="url(#pg)" stroke="#d3930f" stroke-width="0.012" transform="rotate(123.4) scale(70.9 66.0)"/><use href="#pt" fill="url(#pg)" stroke="#d3930f" stroke-width="0.012" transform="rotate(141.4) scale(66.1 65.0)"/><use href="#pt" fill="url(#pg)" stroke="#d3930f" stroke-width="0.012" transform="rotate(156.1) scale(69.9 63.9)"/><use href="#pt" fill="url(#pg)" stroke="#d3930f" stroke-width="0.012" transform="rotate(174.6) scale(74.4 68.2)"/><use href="#pt" fill="url(#pg)" stroke="#d3930f" stroke-width="0.012" transform="rotate(193.5) scale(70.0 69.2)"/><use href="#pt" fill="url(#pg)" stroke="#d3930f" stroke-width="0.012" transform="rotate(207.2) scale(68.6 64.1)"/><use href="#pt" fill="url(#pg)" stroke="#d3930f" stroke-width="0.012" transform="rotate(227.1) scale(72.1 67.8)"/><use href="#pt" fill="url(#pg)" stroke="#d3930f" stroke-width="0.012" transform="rotate(246.2) scale(72.8 63.3)"/><use href="#pt" fill="url(#pg)" stroke="#d3930f" stroke-width="0.012" transform="rotate(259.5) scale(69.0 68.6)"/><use href="#pt" fill="url(#pg)" stroke="#d3930f" stroke-width="0.012" transform="rotate(280.5) scale(80.0 67.9)"/><use href="#pt" fill="url(#pg)" stroke="#d3930f" stroke-width="0.012" transform="rotate(295.7) scale(75.6 64.3)"/><use href="#pt" fill="url(#pg)" stroke="#d3930f" stroke-width="0.012" transform="rotate(312.1) scale(70.7 63.8)"/><use href="#pt" fill="url(#pg)" stroke="#d3930f" stroke-width="0.012" transform="rotate(329.6) scale(68.0 66.1)"/><use href="#pt" fill="url(#pg)" stroke="#d3930f" stroke-width="0.012" transform="rotate(344.8) scale(72.2 66.8)"/></g><g transform="scale(1 1.2)"><circle r="30" fill="url(#dk)"/><circle r="30" fill="#000" filter="url(#sp)"/><circle r="16.8" fill="url(#dc)"/></g></g><g transform="translate(46 229)"><g transform="scale(1 1.22)"><use href="#pt" fill="url(#pb)" stroke="#c98a0e" stroke-width="0.012" transform="rotate(27.1) scale(57.5 59.7)"/><use href="#pt" fill="url(#pb)" stroke="#c98a0e" stroke-width="0.012" transform="rotate(43.6) scale(66.5 63.3)"/><use href="#pt" fill="url(#pb)" stroke="#c98a0e" stroke-width="0.012" transform="rotate(58.2) scale(65.2 62.6)"/><use href="#pt" fill="url(#pb)" stroke="#c98a0e" stroke-width="0.012" transform="rotate(76.7) scale(61.1 60.2)"/><use href="#pt" fill="url(#pb)" stroke="#c98a0e" stroke-width="0.012" transform="rotate(92.9) scale(69.5 63.2)"/><use href="#pt" fill="url(#pb)" stroke="#c98a0e" stroke-width="0.012" transform="rotate(112.8) scale(63.3 62.3)"/><use href="#pt" fill="url(#pb)" stroke="#c98a0e" stroke-width="0.012" transform="rotate(126.5) scale(56.9 59.6)"/><use href="#pt" fill="url(#pb)" stroke="#c98a0e" stroke-width="0.012" transform="rotate(144.6) scale(61.5 61.1)"/><use href="#pt" fill="url(#pb)" stroke="#c98a0e" stroke-width="0.012" transform="rotate(163.9) scale(64.3 62.2)"/><use href="#pt" fill="url(#pb)" stroke="#c98a0e" stroke-width="0.012" transform="rotate(177.8) scale(59.5 59.5)"/><use href="#pt" fill="url(#pb)" stroke="#c98a0e" stroke-width="0.012" transform="rotate(194.4) scale(68.3 62.1)"/><use href="#pt" fill="url(#pb)" stroke="#c98a0e" stroke-width="0.012" transform="rotate(214.3) scale(65.4 60.4)"/><use href="#pt" fill="url(#pb)" stroke="#c98a0e" stroke-width="0.012" transform="rotate(232.0) scale(68.7 63.3)"/><use href="#pt" fill="url(#pb)" stroke="#c98a0e" stroke-width="0.012" transform="rotate(249.0) scale(63.8 63.6)"/><use href="#pt" fill="url(#pb)" stroke="#c98a0e" stroke-width="0.012" transform="rotate(267.2) scale(62.8 64.5)"/><use href="#pt" fill="url(#pb)" stroke="#c98a0e" stroke-width="0.012" transform="rotate(283.2) scale(64.4 63.2)"/><use href="#pt" fill="url(#pb)" stroke="#c98a0e" stroke-width="0.012" transform="rotate(299.3) scale(67.5 62.0)"/><use href="#pt" fill="url(#pb)" stroke="#c98a0e" stroke-width="0.012" transform="rotate(316.3) scale(64.0 63.8)"/><use href="#pt" fill="url(#pb)" stroke="#c98a0e" stroke-width="0.012" transform="rotate(335.3) scale(65.4 64.2)"/><use href="#pt" fill="url(#pb)" stroke="#c98a0e" stroke-width="0.012" transform="rotate(350.9) scale(68.0 64.3)"/><use href="#pt" fill="url(#pb)" stroke="#c98a0e" stroke-width="0.012" transform="rotate(367.6) scale(60.5 60.6)"/><use href="#pt" fill="url(#pg)" stroke="#d3930f" stroke-width="0.012" transform="rotate(17.3) scale(72.6 62.4)"/><use href="#pt" fill="url(#pg)" stroke="#d3930f" stroke-width="0.012" transform="rotate(32.2) scale(70.5 66.8)"/><use href="#pt" fill="url(#pg)" stroke="#d3930f" stroke-width="0.012" transform="rotate(52.8) scale(71.5 65.6)"/><use href="#pt" fill="url(#pg)" stroke="#d3930f" stroke-width="0.012" transform="rotate(67.8) scale(72.2 65.2)"/><use href="#pt" fill="url(#pg)" stroke="#d3930f" stroke-width="0.012" transform="rotate(83.9) scale(68.4 62.6)"/><use href="#pt" fill="url(#pg)" stroke="#d3930f" stroke-width="0.012" transform="rotate(104.1) scale(66.0 65.1)"/><use href="#pt" fill="url(#pg)" stroke="#d3930f" stroke-width="0.012" transform="rotate(120.7) scale(76.4 65.7)"/><use href="#pt" fill="url(#pg)" stroke="#d3930f" stroke-width="0.012" transform="rotate(134.7) scale(66.5 65.8)"/><use href="#pt" fill="url(#pg)" stroke="#d3930f" stroke-width="0.012" transform="rotate(154.2) scale(65.6 63.0)"/><use href="#pt" fill="url(#pg)" stroke="#d3930f" stroke-width="0.012" transform="rotate(172.4) scale(67.8 62.0)"/><use href="#pt" fill="url(#pg)" stroke="#d3930f" stroke-width="0.012" transform="rotate(189.5) scale(65.2 62.8)"/><use href="#pt" fill="url(#pg)" stroke="#d3930f" stroke-width="0.012" transform="rotate(206.7) scale(72.1 63.9)"/><use href="#pt" fill="url(#pg)" stroke="#d3930f" stroke-width="0.012" transform="rotate(219.6) scale(65.5 63.5)"/><use href="#pt" fill="url(#pg)" stroke="#d3930f" stroke-width="0.012" transform="rotate(240.0) scale(72.5 61.9)"/><use href="#pt" fill="url(#pg)" stroke="#d3930f" stroke-width="0.012" transform="rotate(253.9) scale(66.0 65.7)"/><use href="#pt" fill="url(#pg)" stroke="#d3930f" stroke-width="0.012" transform="rotate(272.2) scale(68.1 66.2)"/><use href="#pt" fill="url(#pg)" stroke="#d3930f" stroke-width="0.012" transform="rotate(289.0) scale(70.0 65.5)"/><use href="#pt" fill="url(#pg)" stroke="#d3930f" stroke-width="0.012" transform="rotate(305.4) scale(69.1 67.3)"/><use href="#pt" fill="url(#pg)" stroke="#d3930f" stroke-width="0.012" transform="rotate(322.5) scale(70.4 63.4)"/><use href="#pt" fill="url(#pg)" stroke="#d3930f" stroke-width="0.012" transform="rotate(343.2) scale(65.8 62.1)"/><use href="#pt" fill="url(#pg)" stroke="#d3930f" stroke-width="0.012" transform="rotate(356.8) scale(72.9 64.0)"/></g><g transform="scale(1 1.2)"><circle r="30" fill="url(#dk)"/><circle r="30" fill="#000" filter="url(#sp)"/><circle r="16.8" fill="url(#dc)"/></g></g><g transform="translate(44 396)"><g transform="scale(1 1.3)"><use href="#pt" fill="url(#pb)" stroke="#c98a0e" stroke-width="0.012" transform="rotate(23.7) scale(61.3 62.0)"/><use href="#pt" fill="url(#pb)" stroke="#c98a0e" stroke-width="0.012" transform="rotate(36.7) scale(64.2 62.9)"/><use href="#pt" fill="url(#pb)" stroke="#c98a0e" stroke-width="0.012" transform="rotate(57.6) scale(65.4 61.4)"/><use href="#pt" fill="url(#pb)" stroke="#c98a0e" stroke-width="0.012" transform="rotate(72.4) scale(67.4 63.6)"/><use href="#pt" fill="url(#pb)" stroke="#c98a0e" stroke-width="0.012" transform="rotate(90.2) scale(65.5 62.2)"/><use href="#pt" fill="url(#pb)" stroke="#c98a0e" stroke-width="0.012" transform="rotate(106.2) scale(66.7 62.3)"/><use href="#pt" fill="url(#pb)" stroke="#c98a0e" stroke-width="0.012" transform="rotate(123.7) scale(67.0 63.6)"/><use href="#pt" fill="url(#pb)" stroke="#c98a0e" stroke-width="0.012" transform="rotate(143.8) scale(59.0 61.2)"/><use href="#pt" fill="url(#pb)" stroke="#c98a0e" stroke-width="0.012" transform="rotate(160.7) scale(64.7 63.6)"/><use href="#pt" fill="url(#pb)" stroke="#c98a0e" stroke-width="0.012" transform="rotate(174.3) scale(63.2 60.4)"/><use href="#pt" fill="url(#pb)" stroke="#c98a0e" stroke-width="0.012" transform="rotate(192.4) scale(66.9 64.4)"/><use href="#pt" fill="url(#pb)" stroke="#c98a0e" stroke-width="0.012" transform="rotate(209.1) scale(63.1 62.9)"/><use href="#pt" fill="url(#pb)" stroke="#c98a0e" stroke-width="0.012" transform="rotate(229.9) scale(65.9 64.2)"/><use href="#pt" fill="url(#pb)" stroke="#c98a0e" stroke-width="0.012" transform="rotate(245.6) scale(67.6 63.1)"/><use href="#pt" fill="url(#pb)" stroke="#c98a0e" stroke-width="0.012" transform="rotate(264.4) scale(59.8 59.6)"/><use href="#pt" fill="url(#pb)" stroke="#c98a0e" stroke-width="0.012" transform="rotate(279.7) scale(63.3 61.0)"/><use href="#pt" fill="url(#pb)" stroke="#c98a0e" stroke-width="0.012" transform="rotate(294.3) scale(65.9 64.0)"/><use href="#pt" fill="url(#pb)" stroke="#c98a0e" stroke-width="0.012" transform="rotate(311.6) scale(62.7 62.9)"/><use href="#pt" fill="url(#pb)" stroke="#c98a0e" stroke-width="0.012" transform="rotate(329.1) scale(60.1 62.0)"/><use href="#pt" fill="url(#pb)" stroke="#c98a0e" stroke-width="0.012" transform="rotate(346.3) scale(67.5 64.0)"/><use href="#pt" fill="url(#pb)" stroke="#c98a0e" stroke-width="0.012" transform="rotate(362.5) scale(60.5 63.5)"/><use href="#pt" fill="url(#pg)" stroke="#d3930f" stroke-width="0.012" transform="rotate(12.7) scale(74.2 66.8)"/><use href="#pt" fill="url(#pg)" stroke="#d3930f" stroke-width="0.012" transform="rotate(29.7) scale(68.1 63.6)"/><use href="#pt" fill="url(#pg)" stroke="#d3930f" stroke-width="0.012" transform="rotate(45.9) scale(68.0 67.3)"/><use href="#pt" fill="url(#pg)" stroke="#d3930f" stroke-width="0.012" transform="rotate(64.5) scale(70.5 65.8)"/><use href="#pt" fill="url(#pg)" stroke="#d3930f" stroke-width="0.012" transform="rotate(84.5) scale(73.9 62.8)"/><use href="#pt" fill="url(#pg)" stroke="#d3930f" stroke-width="0.012" transform="rotate(101.2) scale(75.8 65.4)"/><use href="#pt" fill="url(#pg)" stroke="#d3930f" stroke-width="0.012" transform="rotate(116.1) scale(75.8 66.3)"/><use href="#pt" fill="url(#pg)" stroke="#d3930f" stroke-width="0.012" transform="rotate(133.6) scale(72.3 64.2)"/><use href="#pt" fill="url(#pg)" stroke="#d3930f" stroke-width="0.012" transform="rotate(150.2) scale(70.2 61.9)"/><use href="#pt" fill="url(#pg)" stroke="#d3930f" stroke-width="0.012" transform="rotate(166.6) scale(73.3 64.3)"/><use href="#pt" fill="url(#pg)" stroke="#d3930f" stroke-width="0.012" transform="rotate(183.3) scale(62.9 61.5)"/><use href="#pt" fill="url(#pg)" stroke="#d3930f" stroke-width="0.012" transform="rotate(202.5) scale(66.5 63.5)"/><use href="#pt" fill="url(#pg)" stroke="#d3930f" stroke-width="0.012" transform="rotate(219.0) scale(70.0 66.9)"/><use href="#pt" fill="url(#pg)" stroke="#d3930f" stroke-width="0.012" transform="rotate(235.9) scale(73.9 66.6)"/><use href="#pt" fill="url(#pg)" stroke="#d3930f" stroke-width="0.012" transform="rotate(252.3) scale(69.7 64.2)"/><use href="#pt" fill="url(#pg)" stroke="#d3930f" stroke-width="0.012" transform="rotate(268.8) scale(67.1 63.6)"/><use href="#pt" fill="url(#pg)" stroke="#d3930f" stroke-width="0.012" transform="rotate(289.3) scale(70.8 63.3)"/><use href="#pt" fill="url(#pg)" stroke="#d3930f" stroke-width="0.012" transform="rotate(307.3) scale(71.4 66.9)"/><use href="#pt" fill="url(#pg)" stroke="#d3930f" stroke-width="0.012" transform="rotate(322.6) scale(67.8 63.3)"/><use href="#pt" fill="url(#pg)" stroke="#d3930f" stroke-width="0.012" transform="rotate(339.1) scale(77.2 66.1)"/><use href="#pt" fill="url(#pg)" stroke="#d3930f" stroke-width="0.012" transform="rotate(355.3) scale(66.4 61.4)"/></g><g transform="scale(1 1.2)"><circle r="29.5" fill="url(#dk)"/><circle r="29.5" fill="#000" filter="url(#sp)"/><circle r="16.5" fill="url(#dc)"/></g></g><g transform="translate(415 179)"><g transform="scale(1 1.26)"><use href="#pt" fill="url(#pb)" stroke="#c98a0e" stroke-width="0.012" transform="rotate(20.4) scale(69.4 63.6)"/><use href="#pt" fill="url(#pb)" stroke="#c98a0e" stroke-width="0.012" transform="rotate(37.5) scale(61.3 64.3)"/><use href="#pt" fill="url(#pb)" stroke="#c98a0e" stroke-width="0.012" transform="rotate(53.3) scale(67.4 64.4)"/><use href="#pt" fill="url(#pb)" stroke="#c98a0e" stroke-width="0.012" transform="rotate(72.6) scale(61.2 60.0)"/><use href="#pt" fill="url(#pb)" stroke="#c98a0e" stroke-width="0.012" transform="rotate(86.5) scale(64.5 62.3)"/><use href="#pt" fill="url(#pb)" stroke="#c98a0e" stroke-width="0.012" transform="rotate(102.4) scale(60.1 60.5)"/><use href="#pt" fill="url(#pb)" stroke="#c98a0e" stroke-width="0.012" transform="rotate(124.1) scale(61.8 63.4)"/><use href="#pt" fill="url(#pb)" stroke="#c98a0e" stroke-width="0.012" transform="rotate(140.6) scale(62.7 60.1)"/><use href="#pt" fill="url(#pb)" stroke="#c98a0e" stroke-width="0.012" transform="rotate(154.4) scale(64.2 59.4)"/><use href="#pt" fill="url(#pb)" stroke="#c98a0e" stroke-width="0.012" transform="rotate(172.0) scale(66.4 60.5)"/><use href="#pt" fill="url(#pb)" stroke="#c98a0e" stroke-width="0.012" transform="rotate(192.5) scale(66.7 60.9)"/><use href="#pt" fill="url(#pb)" stroke="#c98a0e" stroke-width="0.012" transform="rotate(207.9) scale(61.8 63.0)"/><use href="#pt" fill="url(#pb)" stroke="#c98a0e" stroke-width="0.012" transform="rotate(227.1) scale(69.0 63.0)"/><use href="#pt" fill="url(#pb)" stroke="#c98a0e" stroke-width="0.012" transform="rotate(244.0) scale(61.2 61.0)"/><use href="#pt" fill="url(#pb)" stroke="#c98a0e" stroke-width="0.012" transform="rotate(257.5) scale(57.7 60.2)"/><use href="#pt" fill="url(#pb)" stroke="#c98a0e" stroke-width="0.012" transform="rotate(275.3) scale(59.5 62.6)"/><use href="#pt" fill="url(#pb)" stroke="#c98a0e" stroke-width="0.012" transform="rotate(294.3) scale(61.0 61.2)"/><use href="#pt" fill="url(#pb)" stroke="#c98a0e" stroke-width="0.012" transform="rotate(312.2) scale(61.8 61.9)"/><use href="#pt" fill="url(#pb)" stroke="#c98a0e" stroke-width="0.012" transform="rotate(327.6) scale(60.5 63.1)"/><use href="#pt" fill="url(#pb)" stroke="#c98a0e" stroke-width="0.012" transform="rotate(347.3) scale(63.2 59.5)"/><use href="#pt" fill="url(#pb)" stroke="#c98a0e" stroke-width="0.012" transform="rotate(363.7) scale(63.6 59.5)"/><use href="#pt" fill="url(#pg)" stroke="#d3930f" stroke-width="0.012" transform="rotate(9.9) scale(64.9 64.8)"/><use href="#pt" fill="url(#pg)" stroke="#d3930f" stroke-width="0.012" transform="rotate(25.5) scale(73.2 62.5)"/><use href="#pt" fill="url(#pg)" stroke="#d3930f" stroke-width="0.012" transform="rotate(43.4) scale(76.9 65.9)"/><use href="#pt" fill="url(#pg)" stroke="#d3930f" stroke-width="0.012" transform="rotate(64.2) scale(67.5 63.4)"/><use href="#pt" fill="url(#pg)" stroke="#d3930f" stroke-width="0.012" transform="rotate(79.3) scale(67.3 66.0)"/><use href="#pt" fill="url(#pg)" stroke="#d3930f" stroke-width="0.012" transform="rotate(97.5) scale(76.3 66.1)"/><use href="#pt" fill="url(#pg)" stroke="#d3930f" stroke-width="0.012" transform="rotate(111.1) scale(68.1 67.0)"/><use href="#pt" fill="url(#pg)" stroke="#d3930f" stroke-width="0.012" transform="rotate(129.8) scale(75.8 65.0)"/><use href="#pt" fill="url(#pg)" stroke="#d3930f" stroke-width="0.012" transform="rotate(146.9) scale(73.4 66.9)"/><use href="#pt" fill="url(#pg)" stroke="#d3930f" stroke-width="0.012" transform="rotate(163.9) scale(65.3 63.3)"/><use href="#pt" fill="url(#pg)" stroke="#d3930f" stroke-width="0.012" transform="rotate(179.9) scale(70.0 62.3)"/><use href="#pt" fill="url(#pg)" stroke="#d3930f" stroke-width="0.012" transform="rotate(201.6) scale(62.9 62.3)"/><use href="#pt" fill="url(#pg)" stroke="#d3930f" stroke-width="0.012" transform="rotate(218.7) scale(69.3 64.5)"/><use href="#pt" fill="url(#pg)" stroke="#d3930f" stroke-width="0.012" transform="rotate(232.1) scale(74.6 64.9)"/><use href="#pt" fill="url(#pg)" stroke="#d3930f" stroke-width="0.012" transform="rotate(250.4) scale(64.5 63.9)"/><use href="#pt" fill="url(#pg)" stroke="#d3930f" stroke-width="0.012" transform="rotate(269.8) scale(67.0 61.6)"/><use href="#pt" fill="url(#pg)" stroke="#d3930f" stroke-width="0.012" transform="rotate(286.6) scale(70.3 62.2)"/><use href="#pt" fill="url(#pg)" stroke="#d3930f" stroke-width="0.012" transform="rotate(304.3) scale(74.4 65.1)"/><use href="#pt" fill="url(#pg)" stroke="#d3930f" stroke-width="0.012" transform="rotate(317.2) scale(65.7 64.0)"/><use href="#pt" fill="url(#pg)" stroke="#d3930f" stroke-width="0.012" transform="rotate(338.0) scale(68.3 63.1)"/><use href="#pt" fill="url(#pg)" stroke="#d3930f" stroke-width="0.012" transform="rotate(355.9) scale(78.1 66.4)"/></g><g transform="scale(1 1.2)"><circle r="29" fill="url(#dk)"/><circle r="29" fill="#000" filter="url(#sp)"/><circle r="16.2" fill="url(#dc)"/></g></g><g transform="translate(413 352)"><g transform="scale(1 1.31)"><use href="#pt" fill="url(#pb)" stroke="#c98a0e" stroke-width="0.012" transform="rotate(12.3) scale(59.9 62.4)"/><use href="#pt" fill="url(#pb)" stroke="#c98a0e" stroke-width="0.012" transform="rotate(31.4) scale(58.4 60.9)"/><use href="#pt" fill="url(#pb)" stroke="#c98a0e" stroke-width="0.012" transform="rotate(48.4) scale(60.0 59.1)"/><use href="#pt" fill="url(#pb)" stroke="#c98a0e" stroke-width="0.012" transform="rotate(63.4) scale(60.2 59.4)"/><use href="#pt" fill="url(#pb)" stroke="#c98a0e" stroke-width="0.012" transform="rotate(84.3) scale(58.6 59.6)"/><use href="#pt" fill="url(#pb)" stroke="#c98a0e" stroke-width="0.012" transform="rotate(100.4) scale(66.3 63.9)"/><use href="#pt" fill="url(#pb)" stroke="#c98a0e" stroke-width="0.012" transform="rotate(116.4) scale(61.3 64.1)"/><use href="#pt" fill="url(#pb)" stroke="#c98a0e" stroke-width="0.012" transform="rotate(135.9) scale(58.8 60.5)"/><use href="#pt" fill="url(#pb)" stroke="#c98a0e" stroke-width="0.012" transform="rotate(149.3) scale(65.0 60.6)"/><use href="#pt" fill="url(#pb)" stroke="#c98a0e" stroke-width="0.012" transform="rotate(166.8) scale(64.8 62.0)"/><use href="#pt" fill="url(#pb)" stroke="#c98a0e" stroke-width="0.012" transform="rotate(184.9) scale(59.3 61.8)"/><use href="#pt" fill="url(#pb)" stroke="#c98a0e" stroke-width="0.012" transform="rotate(200.4) scale(63.2 60.0)"/><use href="#pt" fill="url(#pb)" stroke="#c98a0e" stroke-width="0.012" transform="rotate(219.4) scale(62.9 60.6)"/><use href="#pt" fill="url(#pb)" stroke="#c98a0e" stroke-width="0.012" transform="rotate(236.7) scale(64.7 60.5)"/><use href="#pt" fill="url(#pb)" stroke="#c98a0e" stroke-width="0.012" transform="rotate(255.1) scale(62.4 60.2)"/><use href="#pt" fill="url(#pb)" stroke="#c98a0e" stroke-width="0.012" transform="rotate(271.3) scale(67.3 63.5)"/><use href="#pt" fill="url(#pb)" stroke="#c98a0e" stroke-width="0.012" transform="rotate(287.3) scale(62.0 64.1)"/><use href="#pt" fill="url(#pb)" stroke="#c98a0e" stroke-width="0.012" transform="rotate(305.1) scale(61.2 62.9)"/><use href="#pt" fill="url(#pb)" stroke="#c98a0e" stroke-width="0.012" transform="rotate(322.6) scale(62.1 59.2)"/><use href="#pt" fill="url(#pb)" stroke="#c98a0e" stroke-width="0.012" transform="rotate(341.1) scale(67.0 62.0)"/><use href="#pt" fill="url(#pb)" stroke="#c98a0e" stroke-width="0.012" transform="rotate(356.0) scale(65.0 62.6)"/><use href="#pt" fill="url(#pg)" stroke="#d3930f" stroke-width="0.012" transform="rotate(5.9) scale(73.2 63.6)"/><use href="#pt" fill="url(#pg)" stroke="#d3930f" stroke-width="0.012" transform="rotate(24.9) scale(71.3 63.7)"/><use href="#pt" fill="url(#pg)" stroke="#d3930f" stroke-width="0.012" transform="rotate(37.6) scale(72.6 65.1)"/><use href="#pt" fill="url(#pg)" stroke="#d3930f" stroke-width="0.012" transform="rotate(59.4) scale(69.1 65.8)"/><use href="#pt" fill="url(#pg)" stroke="#d3930f" stroke-width="0.012" transform="rotate(73.5) scale(65.1 64.9)"/><use href="#pt" fill="url(#pg)" stroke="#d3930f" stroke-width="0.012" transform="rotate(91.0) scale(63.2 61.9)"/><use href="#pt" fill="url(#pg)" stroke="#d3930f" stroke-width="0.012" transform="rotate(106.2) scale(67.0 65.4)"/><use href="#pt" fill="url(#pg)" stroke="#d3930f" stroke-width="0.012" transform="rotate(124.2) scale(73.1 63.2)"/><use href="#pt" fill="url(#pg)" stroke="#d3930f" stroke-width="0.012" transform="rotate(140.6) scale(69.8 63.6)"/><use href="#pt" fill="url(#pg)" stroke="#d3930f" stroke-width="0.012" transform="rotate(161.7) scale(76.0 65.7)"/><use href="#pt" fill="url(#pg)" stroke="#d3930f" stroke-width="0.012" transform="rotate(175.8) scale(67.5 63.4)"/><use href="#pt" fill="url(#pg)" stroke="#d3930f" stroke-width="0.012" transform="rotate(196.0) scale(68.4 66.6)"/><use href="#pt" fill="url(#pg)" stroke="#d3930f" stroke-width="0.012" transform="rotate(209.6) scale(64.9 62.3)"/><use href="#pt" fill="url(#pg)" stroke="#d3930f" stroke-width="0.012" transform="rotate(228.3) scale(67.4 64.4)"/><use href="#pt" fill="url(#pg)" stroke="#d3930f" stroke-width="0.012" transform="rotate(243.0) scale(67.6 63.4)"/><use href="#pt" fill="url(#pg)" stroke="#d3930f" stroke-width="0.012" transform="rotate(263.0) scale(74.8 66.5)"/><use href="#pt" fill="url(#pg)" stroke="#d3930f" stroke-width="0.012" transform="rotate(279.9) scale(72.4 64.6)"/><use href="#pt" fill="url(#pg)" stroke="#d3930f" stroke-width="0.012" transform="rotate(294.7) scale(75.5 66.2)"/><use href="#pt" fill="url(#pg)" stroke="#d3930f" stroke-width="0.012" transform="rotate(315.9) scale(70.3 65.6)"/><use href="#pt" fill="url(#pg)" stroke="#d3930f" stroke-width="0.012" transform="rotate(330.7) scale(68.5 61.5)"/><use href="#pt" fill="url(#pg)" stroke="#d3930f" stroke-width="0.012" transform="rotate(346.2) scale(63.6 61.3)"/></g><g transform="scale(1 1.2)"><circle r="30.5" fill="url(#dk)"/><circle r="30.5" fill="#000" filter="url(#sp)"/><circle r="17.1" fill="url(#dc)"/></g></g><g transform="translate(417 21)"><g transform="scale(1 1.2)"><use href="#pt" fill="url(#pb)" stroke="#c98a0e" stroke-width="0.012" transform="rotate(17.9) scale(58.5 59.6)"/><use href="#pt" fill="url(#pb)" stroke="#c98a0e" stroke-width="0.012" transform="rotate(37.0) scale(63.8 60.9)"/><use href="#pt" fill="url(#pb)" stroke="#c98a0e" stroke-width="0.012" transform="rotate(50.9) scale(59.3 59.3)"/><use href="#pt" fill="url(#pb)" stroke="#c98a0e" stroke-width="0.012" transform="rotate(68.5) scale(67.6 61.5)"/><use href="#pt" fill="url(#pb)" stroke="#c98a0e" stroke-width="0.012" transform="rotate(84.6) scale(63.5 61.0)"/><use href="#pt" fill="url(#pb)" stroke="#c98a0e" stroke-width="0.012" transform="rotate(103.4) scale(61.1 58.1)"/><use href="#pt" fill="url(#pb)" stroke="#c98a0e" stroke-width="0.012" transform="rotate(120.9) scale(63.1 60.2)"/><use href="#pt" fill="url(#pb)" stroke="#c98a0e" stroke-width="0.012" transform="rotate(136.5) scale(66.5 60.6)"/><use href="#pt" fill="url(#pb)" stroke="#c98a0e" stroke-width="0.012" transform="rotate(157.8) scale(57.2 59.8)"/><use href="#pt" fill="url(#pb)" stroke="#c98a0e" stroke-width="0.012" transform="rotate(170.1) scale(62.6 57.4)"/><use href="#pt" fill="url(#pb)" stroke="#c98a0e" stroke-width="0.012" transform="rotate(188.7) scale(63.5 58.5)"/><use href="#pt" fill="url(#pb)" stroke="#c98a0e" stroke-width="0.012" transform="rotate(205.9) scale(60.4 59.5)"/><use href="#pt" fill="url(#pb)" stroke="#c98a0e" stroke-width="0.012" transform="rotate(221.8) scale(64.2 59.6)"/><use href="#pt" fill="url(#pb)" stroke="#c98a0e" stroke-width="0.012" transform="rotate(239.4) scale(58.5 57.8)"/><use href="#pt" fill="url(#pb)" stroke="#c98a0e" stroke-width="0.012" transform="rotate(256.0) scale(63.5 59.2)"/><use href="#pt" fill="url(#pb)" stroke="#c98a0e" stroke-width="0.012" transform="rotate(276.2) scale(64.0 59.4)"/><use href="#pt" fill="url(#pb)" stroke="#c98a0e" stroke-width="0.012" transform="rotate(290.8) scale(59.9 59.6)"/><use href="#pt" fill="url(#pb)" stroke="#c98a0e" stroke-width="0.012" transform="rotate(310.2) scale(61.1 57.3)"/><use href="#pt" fill="url(#pb)" stroke="#c98a0e" stroke-width="0.012" transform="rotate(324.8) scale(61.6 57.5)"/><use href="#pt" fill="url(#pb)" stroke="#c98a0e" stroke-width="0.012" transform="rotate(346.2) scale(59.6 58.9)"/><use href="#pt" fill="url(#pb)" stroke="#c98a0e" stroke-width="0.012" transform="rotate(359.9) scale(60.6 58.1)"/><use href="#pt" fill="url(#pg)" stroke="#d3930f" stroke-width="0.012" transform="rotate(8.1) scale(64.1 59.3)"/><use href="#pt" fill="url(#pg)" stroke="#d3930f" stroke-width="0.012" transform="rotate(25.2) scale(71.5 62.3)"/><use href="#pt" fill="url(#pg)" stroke="#d3930f" stroke-width="0.012" transform="rotate(45.4) scale(65.1 61.3)"/><use href="#pt" fill="url(#pg)" stroke="#d3930f" stroke-width="0.012" transform="rotate(60.8) scale(66.1 58.6)"/><use href="#pt" fill="url(#pg)" stroke="#d3930f" stroke-width="0.012" transform="rotate(77.4) scale(61.3 60.4)"/><use href="#pt" fill="url(#pg)" stroke="#d3930f" stroke-width="0.012" transform="rotate(95.2) scale(66.2 61.9)"/><use href="#pt" fill="url(#pg)" stroke="#d3930f" stroke-width="0.012" transform="rotate(114.4) scale(65.1 62.4)"/><use href="#pt" fill="url(#pg)" stroke="#d3930f" stroke-width="0.012" transform="rotate(129.8) scale(69.7 63.8)"/><use href="#pt" fill="url(#pg)" stroke="#d3930f" stroke-width="0.012" transform="rotate(147.4) scale(64.1 58.9)"/><use href="#pt" fill="url(#pg)" stroke="#d3930f" stroke-width="0.012" transform="rotate(163.8) scale(65.5 60.9)"/><use href="#pt" fill="url(#pg)" stroke="#d3930f" stroke-width="0.012" transform="rotate(181.6) scale(67.1 61.6)"/><use href="#pt" fill="url(#pg)" stroke="#d3930f" stroke-width="0.012" transform="rotate(196.6) scale(71.7 61.1)"/><use href="#pt" fill="url(#pg)" stroke="#d3930f" stroke-width="0.012" transform="rotate(215.0) scale(58.8 58.8)"/><use href="#pt" fill="url(#pg)" stroke="#d3930f" stroke-width="0.012" transform="rotate(232.7) scale(59.9 58.9)"/><use href="#pt" fill="url(#pg)" stroke="#d3930f" stroke-width="0.012" transform="rotate(247.8) scale(72.1 61.2)"/><use href="#pt" fill="url(#pg)" stroke="#d3930f" stroke-width="0.012" transform="rotate(266.8) scale(66.0 61.2)"/><use href="#pt" fill="url(#pg)" stroke="#d3930f" stroke-width="0.012" transform="rotate(284.0) scale(69.1 61.1)"/><use href="#pt" fill="url(#pg)" stroke="#d3930f" stroke-width="0.012" transform="rotate(303.1) scale(67.3 62.5)"/><use href="#pt" fill="url(#pg)" stroke="#d3930f" stroke-width="0.012" transform="rotate(319.0) scale(65.5 63.7)"/><use href="#pt" fill="url(#pg)" stroke="#d3930f" stroke-width="0.012" transform="rotate(334.1) scale(69.8 62.1)"/><use href="#pt" fill="url(#pg)" stroke="#d3930f" stroke-width="0.012" transform="rotate(353.3) scale(71.2 61.9)"/></g><g transform="scale(1 1.2)"><circle r="27" fill="url(#dk)"/><circle r="27" fill="#000" filter="url(#sp)"/><circle r="15.1" fill="url(#dc)"/></g></g><g transform="translate(67 51)"><g transform="scale(1 1.2)"><use href="#pt" fill="url(#pb)" stroke="#c98a0e" stroke-width="0.012" transform="rotate(12.6) scale(74.1 75.0)"/><use href="#pt" fill="url(#pb)" stroke="#c98a0e" stroke-width="0.012" transform="rotate(28.0) scale(76.5 73.0)"/><use href="#pt" fill="url(#pb)" stroke="#c98a0e" stroke-width="0.012" transform="rotate(46.6) scale(67.5 70.8)"/><use href="#pt" fill="url(#pb)" stroke="#c98a0e" stroke-width="0.012" transform="rotate(64.0) scale(77.6 72.9)"/><use href="#pt" fill="url(#pb)" stroke="#c98a0e" stroke-width="0.012" transform="rotate(76.9) scale(77.2 73.0)"/><use href="#pt" fill="url(#pb)" stroke="#c98a0e" stroke-width="0.012" transform="rotate(95.2) scale(82.6 76.1)"/><use href="#pt" fill="url(#pb)" stroke="#c98a0e" stroke-width="0.012" transform="rotate(111.4) scale(72.6 70.4)"/><use href="#pt" fill="url(#pb)" stroke="#c98a0e" stroke-width="0.012" transform="rotate(133.1) scale(71.3 72.6)"/><use href="#pt" fill="url(#pb)" stroke="#c98a0e" stroke-width="0.012" transform="rotate(147.6) scale(69.2 70.4)"/><use href="#pt" fill="url(#pb)" stroke="#c98a0e" stroke-width="0.012" transform="rotate(164.8) scale(72.2 73.3)"/><use href="#pt" fill="url(#pb)" stroke="#c98a0e" stroke-width="0.012" transform="rotate(180.9) scale(72.9 71.6)"/><use href="#pt" fill="url(#pb)" stroke="#c98a0e" stroke-width="0.012" transform="rotate(198.4) scale(75.7 70.3)"/><use href="#pt" fill="url(#pb)" stroke="#c98a0e" stroke-width="0.012" transform="rotate(216.9) scale(72.6 74.2)"/><use href="#pt" fill="url(#pb)" stroke="#c98a0e" stroke-width="0.012" transform="rotate(236.2) scale(73.2 75.6)"/><use href="#pt" fill="url(#pb)" stroke="#c98a0e" stroke-width="0.012" transform="rotate(250.0) scale(78.9 74.7)"/><use href="#pt" fill="url(#pb)" stroke="#c98a0e" stroke-width="0.012" transform="rotate(270.2) scale(78.3 72.8)"/><use href="#pt" fill="url(#pb)" stroke="#c98a0e" stroke-width="0.012" transform="rotate(286.0) scale(74.8 72.1)"/><use href="#pt" fill="url(#pb)" stroke="#c98a0e" stroke-width="0.012" transform="rotate(304.2) scale(77.4 75.5)"/><use href="#pt" fill="url(#pb)" stroke="#c98a0e" stroke-width="0.012" transform="rotate(319.9) scale(69.5 70.4)"/><use href="#pt" fill="url(#pb)" stroke="#c98a0e" stroke-width="0.012" transform="rotate(338.1) scale(71.0 72.8)"/><use href="#pt" fill="url(#pb)" stroke="#c98a0e" stroke-width="0.012" transform="rotate(354.0) scale(78.4 74.6)"/><use href="#pt" fill="url(#pg)" stroke="#d3930f" stroke-width="0.012" transform="rotate(1.7) scale(82.5 75.6)"/><use href="#pt" fill="url(#pg)" stroke="#d3930f" stroke-width="0.012" transform="rotate(20.8) scale(81.6 76.2)"/><use href="#pt" fill="url(#pg)" stroke="#d3930f" stroke-width="0.012" transform="rotate(36.5) scale(73.3 72.7)"/><use href="#pt" fill="url(#pg)" stroke="#d3930f" stroke-width="0.012" transform="rotate(54.7) scale(87.9 79.4)"/><use href="#pt" fill="url(#pg)" stroke="#d3930f" stroke-width="0.012" transform="rotate(70.3) scale(80.4 73.7)"/><use href="#pt" fill="url(#pg)" stroke="#d3930f" stroke-width="0.012" transform="rotate(90.4) scale(85.5 77.9)"/><use href="#pt" fill="url(#pg)" stroke="#d3930f" stroke-width="0.012" transform="rotate(106.9) scale(81.0 74.2)"/><use href="#pt" fill="url(#pg)" stroke="#d3930f" stroke-width="0.012" transform="rotate(124.5) scale(82.9 76.6)"/><use href="#pt" fill="url(#pg)" stroke="#d3930f" stroke-width="0.012" transform="rotate(138.3) scale(89.5 76.4)"/><use href="#pt" fill="url(#pg)" stroke="#d3930f" stroke-width="0.012" transform="rotate(154.1) scale(89.6 78.0)"/><use href="#pt" fill="url(#pg)" stroke="#d3930f" stroke-width="0.012" transform="rotate(175.6) scale(89.1 77.7)"/><use href="#pt" fill="url(#pg)" stroke="#d3930f" stroke-width="0.012" transform="rotate(190.9) scale(82.3 76.5)"/><use href="#pt" fill="url(#pg)" stroke="#d3930f" stroke-width="0.012" transform="rotate(205.8) scale(86.7 78.6)"/><use href="#pt" fill="url(#pg)" stroke="#d3930f" stroke-width="0.012" transform="rotate(223.6) scale(82.7 76.1)"/><use href="#pt" fill="url(#pg)" stroke="#d3930f" stroke-width="0.012" transform="rotate(241.6) scale(82.2 75.0)"/><use href="#pt" fill="url(#pg)" stroke="#d3930f" stroke-width="0.012" transform="rotate(260.0) scale(83.2 76.8)"/><use href="#pt" fill="url(#pg)" stroke="#d3930f" stroke-width="0.012" transform="rotate(274.2) scale(76.5 74.2)"/><use href="#pt" fill="url(#pg)" stroke="#d3930f" stroke-width="0.012" transform="rotate(294.1) scale(89.9 78.6)"/><use href="#pt" fill="url(#pg)" stroke="#d3930f" stroke-width="0.012" transform="rotate(312.3) scale(81.9 78.3)"/><use href="#pt" fill="url(#pg)" stroke="#d3930f" stroke-width="0.012" transform="rotate(329.7) scale(78.4 77.3)"/><use href="#pt" fill="url(#pg)" stroke="#d3930f" stroke-width="0.012" transform="rotate(342.7) scale(82.5 72.6)"/></g><g transform="scale(1 1.2)"><circle r="36" fill="url(#dk)"/><circle r="36" fill="#000" filter="url(#sp)"/><circle r="20.2" fill="url(#dc)"/></g></g></svg>
<div class="b" style="left:185px;top:195px;width:493px;height:511px;border:1px solid #c3c7cd;border-bottom:none;box-sizing:border-box;"></div>
<div class="b" style="left:653px;top:224px;width:6px;height:482px;background:#000;"></div>
<div class="b" style="left:209px;top:219px;width:444.6px;height:4px;background:#858585;"></div>
<div class="b" style="left:209px;top:219px;width:4px;height:487px;background:#858585;"></div>
<div class="b" style="left:649.2px;top:219px;width:4.2px;height:487px;background:#858585;"></div>
<div class="b" style="left:209px;top:219px;width:444.6px;height:0.8px;background:#a9aeb6;"></div>
<div class="b" style="left:209px;top:219px;width:0.8px;height:487px;background:#a9aeb6;"></div>
<div class="b" style="left:649px;top:224px;width:0.9px;height:482px;background:#b4b8be;"></div>
<div class="b" style="left:213px;top:223px;width:436.6px;height:1px;background:#050505;"></div>
<div class="b" style="left:213px;top:223px;width:1px;height:483px;background:#050505;"></div>
<div class="b" style="left:296px;top:543.5px;width:238px;height:1.4px;background:#f2b632;"></div>
<span id="t11" class="t" style="top:253.0px;font-size:10.4px;line-height:15px;color:#f59a1b;right:858.5px;font-weight:700;font-family:'DejaVu Sans','Liberation Sans',sans-serif;direction:rtl;transform:scaleX(0.7018);transform-origin:right center;">فیلم‌هایی که تابستون دیدم:</span>
<svg class="b" style="left:503px;top:255px" width="11" height="11" viewBox="0 0 12 12"><rect x="0.8" y="4.6" width="10.4" height="6.6" fill="#8a8a8a" stroke="#2a2a2a" stroke-width="0.7"/><path d="M0.8 1.8 L11.2 0.6 V3.6 L0.8 4.6 Z" fill="#333" stroke="#2a2a2a" stroke-width="0.7"/><path d="M3 1.6 L4.2 4.2 M6 1.2 L7.2 3.9 M9 0.9 L10.2 3.6" stroke="#fff" stroke-width="1"/><path d="M2.2 6.6 H9.8 M2.2 8.8 H9.8" stroke="#eee" stroke-width="0.9"/></svg>
<svg class="b" style="left:516.8px;top:254.8px" width="11.6" height="11.6" viewBox="0 0 12 12"><polygon points="11.80,6.00 10.35,7.16 11.02,8.90 9.18,9.18 8.90,11.02 7.16,10.35 6.00,11.80 4.84,10.35 3.10,11.02 2.82,9.18 0.98,8.90 1.65,7.16 0.20,6.00 1.65,4.84 0.98,3.10 2.82,2.82 3.10,0.98 4.84,1.65 6.00,0.20 7.16,1.65 8.90,0.98 9.18,2.82 11.02,3.10 10.35,4.84" fill="#f0a51a" stroke="#2a2a2a" stroke-width="0.7"/><circle cx="6" cy="6" r="3.9" fill="#fcd53a" stroke="#a86a10" stroke-width="0.4"/><circle cx="4.6" cy="5.3" r="0.6" fill="#3b2a0a"/><circle cx="7.4" cy="5.3" r="0.6" fill="#3b2a0a"/><path d="M4.4 7.6 Q6 8.5 7.6 7.6" stroke="#3b2a0a" stroke-width="0.6" fill="none"/></svg>
<div class="b" style="left:532px;top:253px;width:1px;height:14px;background:#5a4fcf;"></div>
<span id="t12" class="t" style="top:325.0px;font-size:10.4px;line-height:15px;color:#f59a1b;right:859.5px;font-weight:700;font-family:'DejaVu Sans','Liberation Sans',sans-serif;direction:rtl;transform:scaleX(0.7046);transform-origin:right center;">سریال‌هایی که تابستون دیدم:</span>
<svg class="b" style="left:502.3px;top:326.8px" width="11.7" height="11.7" viewBox="0 0 12 12"><path d="M3.6 0.8 L5.2 2.8 M8.4 0.8 L6.8 2.8" stroke="#222" stroke-width="0.9" fill="none"/><rect x="0.8" y="2.8" width="10.4" height="8.2" rx="1" fill="#d8d8d8" stroke="#2a2a2a" stroke-width="0.7"/><rect x="2" y="4.2" width="6.8" height="5.4" fill="#3c3c3c"/><circle cx="10" cy="4.6" r="0.7" fill="#e53935"/></svg>
<svg class="b" style="left:516.5px;top:326.8px" width="12" height="12" viewBox="0 0 12 12"><path d="M3 0.5 A6.2 6.2 0 0 0 11.8 8.8 Z" fill="#2fb81a" stroke="#2a2a2a" stroke-width="0.7"/><path d="M4.2 1.9 A4.7 4.7 0 0 0 10.5 7.8 Z" fill="#e8402a"/><circle cx="4.6" cy="4.2" r="0.45" fill="#222"/><circle cx="5.4" cy="6.2" r="0.45" fill="#222"/><circle cx="7" cy="7.4" r="0.4" fill="#222"/></svg>
<span id="t13" class="t" style="top:397.0px;font-size:10.4px;line-height:15px;color:#f59a1b;right:860.0px;font-weight:700;font-family:'DejaVu Sans','Liberation Sans',sans-serif;direction:rtl;transform:scaleX(0.7023);transform-origin:right center;">کتاب‌هایی که تابستون خوندم:</span>
<svg class="b" style="left:502px;top:399px" width="11.7" height="11.7" viewBox="0 0 12 12"><path d="M0.8 2.4 H5.4 L6 3 L6.6 2.4 H11.2 V10 H6.6 L6 10.6 L5.4 10 H0.8 Z" fill="#fff" stroke="#2a2a2a" stroke-width="0.8"/><path d="M0.8 10 H5.4 L6 10.6 L6.6 10 H11.2" fill="none" stroke="#3f6fb0" stroke-width="1"/><path d="M6 3 V10.4" stroke="#9ab" stroke-width="0.6"/></svg>
<svg class="b" style="left:516.5px;top:398.7px" width="12" height="12" viewBox="0 0 12 12"><path d="M1 1.2 L3.4 3 L3.6 0.6 L5.2 3 L6.6 1.2 L6.4 4.4 L3 4.8 Z" fill="#3c9b3c" stroke="#2a2a2a" stroke-width="0.7"/><ellipse cx="7" cy="7.6" rx="3.6" ry="4.2" fill="#f1b51c" transform="rotate(-40 7 7.6)" stroke="#2a2a2a" stroke-width="0.7"/><path d="M5 6 L9 9.4 M4.8 8.2 L7.4 10.6 M6.4 4.8 L9.8 7.6" stroke="#c98512" stroke-width="0.5"/></svg>
<span id="t14" class="t" style="top:469.5px;font-size:10.4px;line-height:15px;color:#f59a1b;right:859.0px;font-weight:700;font-family:'DejaVu Sans','Liberation Sans',sans-serif;direction:rtl;transform:scaleX(0.7025);transform-origin:right center;">پادکست‌هایی که تابستون گوش دادم:</span>
<svg class="b" style="left:503px;top:471.5px" width="11.7" height="11.7" viewBox="0 0 12 12"><path d="M1.8 8 V6 A4.2 4.2 0 0 1 10.2 6 V8" fill="none" stroke="#2a2a2a" stroke-width="1.9"/><path d="M1.8 8 V6 A4.2 4.2 0 0 1 10.2 6 V8" fill="none" stroke="#999" stroke-width="0.8"/><rect x="0.8" y="6.4" width="3" height="4.8" rx="1" fill="#777" stroke="#2a2a2a" stroke-width="0.7"/><rect x="8.2" y="6.4" width="3" height="4.8" rx="1" fill="#777" stroke="#2a2a2a" stroke-width="0.7"/></svg>
<svg class="b" style="left:517px;top:471.2px" width="12" height="12" viewBox="0 0 12 12"><path d="M0.8 2.4 H10 L5.4 7 Z" fill="#e8ecef" stroke="#2a2a2a" stroke-width="0.7"/><path d="M2.2 3.6 H8.6 L5.4 6.8 Z" fill="#e85d3a"/><path d="M5.4 7 V10.4 M3 10.8 H7.8" stroke="#444" stroke-width="0.9"/><circle cx="9.8" cy="2" r="1.5" fill="#7cc142" stroke="#2a2a2a" stroke-width="0.5"/></svg>
<span id="t15" class="t" style="top:559.0px;font-size:10.4px;line-height:15px;color:#f59a1b;right:854.0px;font-weight:700;font-family:'DejaVu Sans','Liberation Sans',sans-serif;direction:rtl;transform:scaleX(0.6919);transform-origin:right center;">دوست دارم این کارارو بکنم که آدم بهتری باشم:</span>
<svg class="b" style="left:508px;top:561.5px" width="10.5" height="10.5" viewBox="0 0 12 12"><path d="M6.4 1.2 C9.4 1.2 11.4 3 11.4 5.2 C11.4 7.4 9.4 9.2 6.4 9.2 C5.6 9.2 4.9 9.1 4.3 8.9 L0.8 10.8 L2.4 7.8 C1.8 7 1.4 6.2 1.4 5.2 C1.4 3 3.4 1.2 6.4 1.2 Z" fill="#fff" stroke="#444" stroke-width="0.8"/></svg>
<svg class="b" style="left:519.5px;top:561px" width="10.5" height="10.5" viewBox="0 0 12 12"><path d="M1.6 11.6 Q6 8 10.4 11.6 Z" fill="#4c9a2a" stroke="#2a2a2a" stroke-width="0.7"/><circle cx="6" cy="5.2" r="4.7" fill="#f5b916" stroke="#2a2a2a" stroke-width="0.7"/><circle cx="6" cy="5.2" r="2.3" fill="#6b3f12"/></svg>
<span id="t16" class="t" style="top:630.5px;font-size:10.4px;line-height:15px;color:#f59a1b;right:845.0px;font-weight:700;font-family:'DejaVu Sans','Liberation Sans',sans-serif;direction:rtl;transform:scaleX(0.6924);transform-origin:right center;">این کارارو کردم، حس می‌کنم آدم بهتری‌ام:</span>
<svg class="b" style="left:516.5px;top:632.3px" width="12" height="12" viewBox="0 0 12 12"><path d="M8.4 8.6 L11.6 11.6 L7.6 11.2 Z" fill="#3c9b3c" stroke="#2a2a2a" stroke-width="0.7"/><circle cx="6" cy="6" r="5.2" fill="#ee6fa6" stroke="#2a2a2a" stroke-width="0.7"/><circle cx="6" cy="6" r="2.2" fill="#d42a6b"/><circle cx="6.4" cy="5.6" r="0.9" fill="#f7d038"/></svg>
<div class="b" style="left:688px;top:195px;width:493px;height:511px;background:#ffe0b2;border:1px solid #c9c6c0;border-bottom:none;box-sizing:border-box;"></div>
<div class="b" style="left:1156px;top:224px;width:6px;height:482px;background:#000;"></div>
<div class="b" style="left:712px;top:219px;width:444.6px;height:4px;background:#858585;"></div>
<div class="b" style="left:712px;top:219px;width:4px;height:487px;background:#858585;"></div>
<div class="b" style="left:1152.2px;top:219px;width:4.2px;height:487px;background:#858585;"></div>
<div class="b" style="left:712px;top:219px;width:444.6px;height:0.8px;background:#a9aeb6;"></div>
<div class="b" style="left:712px;top:219px;width:0.8px;height:487px;background:#a9aeb6;"></div>
<div class="b" style="left:1152px;top:224px;width:0.9px;height:482px;background:#b4b8be;"></div>
<div class="b" style="left:716px;top:223px;width:436.6px;height:1px;background:#050505;"></div>
<div class="b" style="left:716px;top:223px;width:1px;height:483px;background:#050505;"></div>
<svg class="b" style="left:1009px;top:255.5px" width="12" height="12" viewBox="0 0 12 12"><polygon points="11.80,6.00 10.35,7.16 11.02,8.90 9.18,9.18 8.90,11.02 7.16,10.35 6.00,11.80 4.84,10.35 3.10,11.02 2.82,9.18 0.98,8.90 1.65,7.16 0.20,6.00 1.65,4.84 0.98,3.10 2.82,2.82 3.10,0.98 4.84,1.65 6.00,0.20 7.16,1.65 8.90,0.98 9.18,2.82 11.02,3.10 10.35,4.84" fill="#f0a51a" stroke="#2a2a2a" stroke-width="0.7"/><circle cx="6" cy="6" r="3.9" fill="#fcd53a" stroke="#a86a10" stroke-width="0.4"/><circle cx="4.6" cy="5.3" r="0.6" fill="#3b2a0a"/><circle cx="7.4" cy="5.3" r="0.6" fill="#3b2a0a"/><path d="M4.4 7.6 Q6 8.5 7.6 7.6" stroke="#3b2a0a" stroke-width="0.6" fill="none"/></svg>
<svg class="b" style="left:996px;top:256px" width="11.5" height="11.5" viewBox="0 0 12 12"><rect x="0.8" y="1" width="10.4" height="10" rx="0.8" fill="#fff" stroke="#2a2a2a" stroke-width="0.7"/><rect x="1.2" y="1.4" width="9.6" height="2.6" fill="#d9433b"/><path d="M3 6 H9 M3 8 H9" stroke="#aaa" stroke-width="0.8"/></svg>
<span id="t17" class="t" style="top:254.0px;font-size:10.4px;line-height:15px;color:#111;right:365.0px;font-weight:700;font-family:'DejaVu Sans','Liberation Sans',sans-serif;direction:rtl;transform:scaleX(0.7245);transform-origin:right center;">امروز چندمه؟</span>
<span id="t18" class="t" style="top:254.0px;font-size:10.4px;line-height:15px;color:#111;right:453.0px;font-weight:700;font-family:'DejaVu Sans','Liberation Sans',sans-serif;direction:rtl;transform:scaleX(0.6917);transform-origin:right center;">۱ تیر</span>
<svg class="b" style="left:1080px;top:281px" width="13" height="13" viewBox="0 0 12 12"><path d="M7 0.6 L8.2 4.6 L11.6 6 L8.2 7.4 L7 11.4 L5.8 7.4 L2.4 6 L5.8 4.6 Z" fill="#f7c531" stroke="#2a2a2a" stroke-width="0.7"/><path d="M2.6 0.6 L3.3 2.5 L5 3.2 L3.3 3.9 L2.6 5.8 L1.9 3.9 L0.2 3.2 L1.9 2.5 Z" fill="#7a5cc0" stroke="#2a2a2a" stroke-width="0.4"/><path d="M2.6 7.4 L3.1 8.7 L4.4 9.2 L3.1 9.7 L2.6 11 L2.1 9.7 L0.8 9.2 L2.1 8.7 Z" fill="#5aa0e0" stroke="#2a2a2a" stroke-width="0.4"/></svg>
<svg class="b" style="left:1067px;top:282px" width="11.5" height="11.5" viewBox="0 0 12 12"><path d="M1.6 11.6 Q6 8 10.4 11.6 Z" fill="#4c9a2a" stroke="#2a2a2a" stroke-width="0.7"/><circle cx="6" cy="5.2" r="4.7" fill="#f5b916" stroke="#2a2a2a" stroke-width="0.7"/><circle cx="6" cy="5.2" r="2.3" fill="#6b3f12"/></svg>
<span id="t19" class="t" style="top:280.0px;font-size:10.4px;line-height:15px;color:#111;right:298.0px;font-weight:700;font-family:'DejaVu Sans','Liberation Sans',sans-serif;direction:rtl;transform:scaleX(0.7440);transform-origin:right center;">یه جمله قشنگ برای امروز:</span>
<svg class="b" style="left:933.5px;top:280.5px" width="13" height="13" viewBox="0 0 12 12"><path d="M3 0.5 A6.2 6.2 0 0 0 11.8 8.8 Z" fill="#2fb81a" stroke="#2a2a2a" stroke-width="0.7"/><path d="M4.2 1.9 A4.7 4.7 0 0 0 10.5 7.8 Z" fill="#e8402a"/><circle cx="4.6" cy="4.2" r="0.45" fill="#222"/><circle cx="5.4" cy="6.2" r="0.45" fill="#222"/><circle cx="7" cy="7.4" r="0.4" fill="#222"/></svg>
<span id="t20" class="t" style="top:280.0px;font-size:10.4px;line-height:15px;color:#111;right:431.0px;font-family:'DejaVu Sans','Liberation Sans',sans-serif;direction:rtl;transform:scaleX(0.7906);transform-origin:right center;-webkit-text-stroke:0.25px #111;">لبخند بزن، تابستون تو راهه!</span>
<svg class="b" style="left:1079px;top:306.5px" width="14" height="14" viewBox="0 0 12 12"><path d="M8 2.6 Q11.8 0.4 11 3.6 L8.6 4.2" fill="#7cb342" stroke="#2a2a2a" stroke-width="0.7"/><path d="M1 2.2 H9 L7.4 6.2 H2.6 Z" fill="#e7b33a" stroke="#2a2a2a" stroke-width="0.7"/><rect x="4" y="6.2" width="2" height="3" fill="#e06a3a" stroke="#2a2a2a" stroke-width="0.7"/><rect x="2.8" y="9.2" width="4.4" height="1.8" fill="#c0502a" stroke="#2a2a2a" stroke-width="0.7"/></svg>
<svg class="b" style="left:1063.5px;top:307px" width="12.5" height="12.5" viewBox="0 0 12 12"><path d="M3 0.5 A6.2 6.2 0 0 0 11.8 8.8 Z" fill="#2fb81a" stroke="#2a2a2a" stroke-width="0.7"/><path d="M4.2 1.9 A4.7 4.7 0 0 0 10.5 7.8 Z" fill="#e8402a"/><circle cx="4.6" cy="4.2" r="0.45" fill="#222"/><circle cx="5.4" cy="6.2" r="0.45" fill="#222"/><circle cx="7" cy="7.4" r="0.4" fill="#222"/></svg>
<span id="t21" class="t" style="top:306.0px;font-size:10.4px;line-height:15px;color:#111;right:297.0px;font-weight:700;font-family:'DejaVu Sans','Liberation Sans',sans-serif;direction:rtl;transform:scaleX(0.7106);transform-origin:right center;">امروز می‌خوام به چی برسم؟</span>
<svg class="b" style="left:967.5px;top:333.5px" width="12.5" height="12.5" viewBox="0 0 12 12"><rect x="0.5" y="0.5" width="11" height="11" fill="#22b14c" stroke="#1d3b22" stroke-width="0.8"/><path d="M2.8 6.2 L5 8.6 L9.4 3.2" fill="none" stroke="#fff" stroke-width="1.5"/></svg>
<svg class="b" style="left:954px;top:334px" width="11.5" height="11.5" viewBox="0 0 12 12"><path d="M1 1.2 L3.4 3 L3.6 0.6 L5.2 3 L6.6 1.2 L6.4 4.4 L3 4.8 Z" fill="#3c9b3c" stroke="#2a2a2a" stroke-width="0.7"/><ellipse cx="7" cy="7.6" rx="3.6" ry="4.2" fill="#f1b51c" transform="rotate(-40 7 7.6)" stroke="#2a2a2a" stroke-width="0.7"/><path d="M5 6 L9 9.4 M4.8 8.2 L7.4 10.6 M6.4 4.8 L9.8 7.6" stroke="#c98512" stroke-width="0.5"/></svg>
<span id="t22" class="t" style="top:332.0px;font-size:10.4px;line-height:15px;color:#111;right:414.0px;font-weight:700;font-family:'DejaVu Sans','Liberation Sans',sans-serif;direction:rtl;transform:scaleX(0.6756);transform-origin:right center;">کارای مهم امروز</span>
<div class="b" style="left:915px;top:361.0px;width:8px;height:8px;border:1px solid #333;box-sizing:border-box;"></div>
<div class="b" style="left:801px;top:361px;width:110px;height:12px;overflow:hidden;white-space:nowrap;font-size:7px;line-height:12px;letter-spacing:-0.12px;color:#222;font-weight:700">..........................................................................................</div>
<div class="b" style="left:1084px;top:361.0px;width:8px;height:8px;border:1px solid #333;box-sizing:border-box;"></div>
<div class="b" style="left:971px;top:361px;width:110px;height:12px;overflow:hidden;white-space:nowrap;font-size:7px;line-height:12px;letter-spacing:-0.12px;color:#222;font-weight:700">..........................................................................................</div>
<div class="b" style="left:915px;top:387.0px;width:8px;height:8px;border:1px solid #333;box-sizing:border-box;"></div>
<div class="b" style="left:801px;top:387px;width:110px;height:12px;overflow:hidden;white-space:nowrap;font-size:7px;line-height:12px;letter-spacing:-0.12px;color:#222;font-weight:700">..........................................................................................</div>
<div class="b" style="left:1084px;top:387.0px;width:8px;height:8px;border:1px solid #333;box-sizing:border-box;"></div>
<div class="b" style="left:971px;top:387px;width:110px;height:12px;overflow:hidden;white-space:nowrap;font-size:7px;line-height:12px;letter-spacing:-0.12px;color:#222;font-weight:700">..........................................................................................</div>
<div class="b" style="left:915px;top:413.0px;width:8px;height:8px;border:1px solid #333;box-sizing:border-box;"></div>
<div class="b" style="left:801px;top:413px;width:110px;height:12px;overflow:hidden;white-space:nowrap;font-size:7px;line-height:12px;letter-spacing:-0.12px;color:#222;font-weight:700">..........................................................................................</div>
<div class="b" style="left:1084px;top:413.0px;width:8px;height:8px;border:1px solid #333;box-sizing:border-box;"></div>
<div class="b" style="left:971px;top:413px;width:110px;height:12px;overflow:hidden;white-space:nowrap;font-size:7px;line-height:12px;letter-spacing:-0.12px;color:#222;font-weight:700">..........................................................................................</div>
<svg class="b" style="left:1080px;top:458.0px" width="13.5" height="13.5" viewBox="0 0 12 12"><ellipse cx="6" cy="9.4" rx="5.4" ry="2.1" fill="#e8b23a" stroke="#2a2a2a" stroke-width="0.7"/><path d="M2.8 9 Q6 3.6 9.2 9 Z" fill="#3aa6a0" stroke="#2a2a2a" stroke-width="0.7"/><circle cx="6" cy="3.2" r="2.3" fill="#d8a06a" stroke="#2a2a2a" stroke-width="0.7"/><path d="M3.6 2.8 Q6 -0.8 8.4 2.8 Z" fill="#5a3a1a"/></svg>
<svg class="b" style="left:1068px;top:459.5px" width="11.5" height="11.5" viewBox="0 0 12 12"><path d="M5.4 4 Q5 8 5.8 11.4 H7.2 Q6.2 8 6.6 4 Z" fill="#9a6a2a" stroke="#2a2a2a" stroke-width="0.7"/><path d="M6 4 Q2 1.4 0.6 4.6 Q3.4 3.4 6 4 Q9 1 11.4 4.4 Q8.6 3.4 6 4 Q5 0.6 2.4 1 Q5 2 6 4 Q7.4 0.4 10 1.2 Q7.4 2 6 4" fill="#3c9b3c" stroke="#1f4f22" stroke-width="0.6"/></svg>
<span id="t23" class="t" style="top:457.5px;font-size:10.4px;line-height:15px;color:#111;right:296.0px;font-weight:700;font-family:'DejaVu Sans','Liberation Sans',sans-serif;direction:rtl;transform:scaleX(0.7446);transform-origin:right center;">یه کم به خودم برسم</span>
<div class="b" style="left:1055.5px;top:486.0px;width:8px;height:8px;border:1px solid #333;box-sizing:border-box;"></div>
<span id="t24" class="t" style="top:483.0px;font-size:10.4px;line-height:15px;color:#111;right:308.0px;font-family:'DejaVu Sans','Liberation Sans',sans-serif;direction:rtl;transform:scaleX(0.7791);transform-origin:right center;-webkit-text-stroke:0.25px #111;">آب کافی بنوشم</span>
<div class="b" style="left:920.5px;top:486.0px;width:8px;height:8px;border:1px solid #333;box-sizing:border-box;"></div>
<span id="t25" class="t" style="top:483.0px;font-size:10.4px;line-height:15px;color:#111;right:443.0px;font-family:'DejaVu Sans','Liberation Sans',sans-serif;direction:rtl;transform:scaleX(0.8437);transform-origin:right center;-webkit-text-stroke:0.25px #111;">یه حرکت کوچیک برای بدن</span>
<div class="b" style="left:1058px;top:512.0px;width:8px;height:8px;border:1px solid #333;box-sizing:border-box;"></div>
<span id="t26" class="t" style="top:509.0px;font-size:10.4px;line-height:15px;color:#111;right:305.0px;font-family:'DejaVu Sans','Liberation Sans',sans-serif;direction:rtl;transform:scaleX(0.8601);transform-origin:right center;-webkit-text-stroke:0.25px #111;">چند دقیقه مدیتیشن</span>
<div class="b" style="left:922px;top:512.0px;width:8px;height:8px;border:1px solid #333;box-sizing:border-box;"></div>
<span id="t27" class="t" style="top:509.0px;font-size:10.4px;line-height:15px;color:#111;right:441.0px;font-family:'DejaVu Sans','Liberation Sans',sans-serif;direction:rtl;transform:scaleX(0.8050);transform-origin:right center;-webkit-text-stroke:0.25px #111;">پادکست گوش بدم</span>
<svg class="b" style="left:1053.5px;top:535.0px" width="12.5" height="12.5" viewBox="0 0 12 12"><path d="M6 0.6 C8 4 10 6 10 8 A4 4 0 0 1 2 8 C2 6 4 4 6 0.6 Z" fill="#2f9be6" stroke="#1b5fa0" stroke-width="0.6"/><path d="M4 8.4 A2 2 0 0 0 5.6 10.2" stroke="#bfe3fb" stroke-width="0.8" fill="none"/></svg>
<svg class="b" style="left:1040px;top:536.0px" width="11.5" height="11.5" viewBox="0 0 12 12"><path d="M0.8 2.4 H10 L5.4 7 Z" fill="#e8ecef" stroke="#2a2a2a" stroke-width="0.7"/><path d="M2.2 3.6 H8.6 L5.4 6.8 Z" fill="#e85d3a"/><path d="M5.4 7 V10.4 M3 10.8 H7.8" stroke="#444" stroke-width="0.9"/><circle cx="9.8" cy="2" r="1.5" fill="#7cc142" stroke="#2a2a2a" stroke-width="0.5"/></svg>
<span id="t28" class="t" style="top:534.5px;font-size:10.4px;line-height:15px;color:#111;right:320.0px;font-weight:700;font-family:'DejaVu Sans','Liberation Sans',sans-serif;direction:rtl;transform:scaleX(0.7126);transform-origin:right center;">یادم نره!</span>
<div class="b" style="left:1061px;top:563.0px;width:8px;height:8px;border:1px solid #333;box-sizing:border-box;"></div>
<div class="b" style="left:948px;top:563px;width:109.5px;height:12px;overflow:hidden;white-space:nowrap;font-size:7px;line-height:12px;letter-spacing:-0.12px;color:#222;font-weight:700">..........................................................................................</div>
<div class="b" style="left:911px;top:563.0px;width:8px;height:8px;border:1px solid #333;box-sizing:border-box;"></div>
<div class="b" style="left:797.5px;top:563px;width:110.0px;height:12px;overflow:hidden;white-space:nowrap;font-size:7px;line-height:12px;letter-spacing:-0.12px;color:#222;font-weight:700">..........................................................................................</div>
<div class="b" style="left:1064.5px;top:610.0px;width:8px;height:8px;border:1px solid #333;box-sizing:border-box;"></div>
<div class="b" style="left:951px;top:610px;width:109.5px;height:12px;overflow:hidden;white-space:nowrap;font-size:7px;line-height:12px;letter-spacing:-0.12px;color:#222;font-weight:700">..........................................................................................</div>
<div class="b" style="left:908px;top:610.0px;width:8px;height:8px;border:1px solid #333;box-sizing:border-box;"></div>
<div class="b" style="left:794.5px;top:610px;width:109.5px;height:12px;overflow:hidden;white-space:nowrap;font-size:7px;line-height:12px;letter-spacing:-0.12px;color:#222;font-weight:700">..........................................................................................</div>
<svg class="b" style="left:985.5px;top:656px" width="14" height="14" viewBox="0 0 12 12"><path d="M6.4 1.2 C9.4 1.2 11.4 3 11.4 5.2 C11.4 7.4 9.4 9.2 6.4 9.2 C5.6 9.2 4.9 9.1 4.3 8.9 L0.8 10.8 L2.4 7.8 C1.8 7 1.4 6.2 1.4 5.2 C1.4 3 3.4 1.2 6.4 1.2 Z" fill="#fff" stroke="#444" stroke-width="0.8"/></svg>
<svg class="b" style="left:972.5px;top:657px" width="11.5" height="11.5" viewBox="0 0 12 12"><path d="M8.4 8.6 L11.6 11.6 L7.6 11.2 Z" fill="#3c9b3c" stroke="#2a2a2a" stroke-width="0.7"/><circle cx="6" cy="6" r="5.2" fill="#ee6fa6" stroke="#2a2a2a" stroke-width="0.7"/><circle cx="6" cy="6" r="2.2" fill="#d42a6b"/><circle cx="6.4" cy="5.6" r="0.9" fill="#f7d038"/></svg>
<span id="t29" class="t" style="top:655.0px;font-size:10.4px;line-height:15px;color:#111;right:393.0px;font-weight:700;font-family:'DejaVu Sans','Liberation Sans',sans-serif;direction:rtl;transform:scaleX(0.7519);transform-origin:right center;">چیزی که می‌خوام بنویسم</span>
<div class="b" style="left:877px;top:683px;width:114px;height:12px;overflow:hidden;white-space:nowrap;font-size:7px;line-height:12px;letter-spacing:-0.12px;color:#222;font-weight:700">..........................................................................................</div>
<div class="b" style="left:0px;top:0px;width:1360px;height:34px;background:#2b579a;"></div>
<span id="t30" class="t" style="top:7.7px;font-size:13.4px;line-height:19px;color:#fff;left:21.0px;transform:scaleX(0.8609);transform-origin:left center;">AutoSave</span>
<div class="b" style="left:78px;top:8.5px;width:38px;height:16.5px;border:1.3px solid #fff;border-radius:9px;"></div>
<div class="b" style="left:83px;top:12.2px;width:9.5px;height:9.5px;background:#fff;border-radius:5px;"></div>
<span id="t31" class="t" style="top:9.2px;font-size:11.2px;line-height:16px;color:#fff;left:96.5px;transform:scaleX(0.9512);transform-origin:left center;">Off</span>
<svg class="b" style="left:128px;top:8px;" width="19" height="19" viewBox="0 0 19 19"><path d="M1.7 1.7 H14.2 L17.3 4.8 V17.3 H1.7 Z" fill="none" stroke="#fff" stroke-width="1.1"/><path d="M4.8 1.7 V7 H13 V1.7" fill="none" stroke="#fff" stroke-width="1.1"/><path d="M5 17.3 V11.3 H14 V17.3" fill="none" stroke="#fff" stroke-width="1.1"/></svg>
<svg class="b" style="left:158px;top:8px;" width="20" height="20" viewBox="0 0 20 20"><path d="M2.2 3 V9.2 H8.4" fill="none" stroke="#6f8fc4" stroke-width="1.3"/><path d="M2.6 8.8 C5 4.2 10 2.6 13.4 5.2 C17 8 16.2 13.6 10.4 17.6" fill="none" stroke="#6f8fc4" stroke-width="1.3"/></svg>
<svg class="b" style="left:178.9px;top:13.9px;" width="7.2" height="5.2" viewBox="0 0 7.2 5.2"><path d="M1 1.17 L3.6 3.77 L6.2 1.17" fill="none" stroke="#6f8fc4" stroke-width="1.1"/></svg>
<svg class="b" style="left:195px;top:7px;" width="20" height="20" viewBox="0 0 20 20"><path d="M15.4 5.6 A7.2 7.2 0 1 0 17.6 11" fill="none" stroke="#6f8fc4" stroke-width="1.3"/><path d="M16.2 1.8 V6.2 H11.8" fill="none" stroke="#6f8fc4" stroke-width="1.3"/></svg>
<svg class="b" style="left:228px;top:11px;" width="12" height="12" viewBox="0 0 12 12"><path d="M1.6 1.6 H9.4" stroke="#fff" stroke-width="1.3"/><path d="M1.8 5 L5.5 8.6 L9.2 5" fill="none" stroke="#fff" stroke-width="1.3"/></svg>
<span id="t32" class="t" style="top:7.7px;font-size:13.4px;line-height:19px;color:#fff;left:303.0px;transform:scaleX(0.8805);transform-origin:left center;">Summer Planner.docx</span>
<div class="b" style="left:424.5px;top:17px;width:3.5px;height:3.5px;background:#fff;"></div>
<span id="t33" class="t" style="top:7.7px;font-size:13.4px;line-height:19px;color:#fff;left:434.0px;transform:scaleX(0.8165);transform-origin:left center;">Saved</span>
<svg class="b" style="left:469.8px;top:12.3px;" width="10.4" height="8.4" viewBox="0 0 10.4 8.4"><path d="M1 1.89 L5.2 6.09 L9.4 1.89" fill="none" stroke="#fff" stroke-width="1.3"/></svg>
<div class="b" style="left:535px;top:5px;width:367px;height:24px;background:#a8b9d6;"></div>
<svg class="b" style="left:554px;top:9px;" width="17" height="17" viewBox="0 0 17 17"><circle cx="10" cy="6.6" r="4.6" fill="none" stroke="#2b579a" stroke-width="1.3"/><path d="M6.8 10 L1.5 15.4" stroke="#2b579a" stroke-width="1.5"/></svg>
<span id="t34" class="t" style="top:7.3px;font-size:13.4px;line-height:19px;color:#1e3f73;left:585.0px;transform:scaleX(0.8247);transform-origin:left center;">Search</span>
<div class="b" style="left:1108px;top:7px;width:58px;height:19px;background:#fff;border-radius:1px;"></div>
<span id="t35" class="t" style="top:7.3px;font-size:13.4px;line-height:19px;color:#2b579a;left:1119.5px;transform:scaleX(0.8546);transform-origin:left center;">Sign in</span>
<svg class="b" style="left:1190px;top:9px;" width="17" height="14" viewBox="0 0 17 14"><rect x="1.6" y="1.6" width="13.6" height="10.4" fill="none" stroke="#fff" stroke-width="1.1"/><path d="M1.6 4.4 H15.2" stroke="#fff" stroke-width="1.1"/><path d="M8.4 10.6 V6.4 M6.2 8.2 L8.4 6 L10.6 8.2" fill="none" stroke="#fff" stroke-width="1.1"/></svg>
<div class="b" style="left:1239px;top:15.5px;width:11.5px;height:1.2px;background:#fff;"></div>
<svg class="b" style="left:1284px;top:10px;" width="14" height="13" viewBox="0 0 14 13"><rect x="1.6" y="3.6" width="8.4" height="8.4" rx="1" fill="none" stroke="#fff" stroke-width="1.1"/><path d="M4 3.4 V2.6 Q4 1.6 5 1.6 H11.4 Q12.4 1.6 12.4 2.6 V9 Q12.4 10 11.4 10 H10.4" fill="none" stroke="#fff" stroke-width="1.1"/></svg>
<svg class="b" style="left:1330px;top:9px;" width="15" height="15" viewBox="0 0 15 15"><path d="M1.6 1.6 L13 13 M13 1.6 L1.6 13" stroke="#fff" stroke-width="1.3"/></svg>
<div class="b" style="left:0px;top:34px;width:1360px;height:127px;background:#f3f2f1;"></div>
<span id="t36" class="t" style="top:39.1px;font-size:14.0px;line-height:20px;color:#3b3a39;left:17.0px;transform:scaleX(0.7978);transform-origin:left center;">File</span>
<span id="t37" class="t" style="top:39.1px;font-size:14.0px;line-height:20px;color:#3b3a39;left:133.0px;transform:scaleX(0.9139);transform-origin:left center;">Insert</span>
<span id="t38" class="t" style="top:39.1px;font-size:14.0px;line-height:20px;color:#3b3a39;left:194.0px;transform:scaleX(0.9176);transform-origin:left center;">Design</span>
<span id="t39" class="t" style="top:39.1px;font-size:14.0px;line-height:20px;color:#3b3a39;left:263.0px;transform:scaleX(0.9038);transform-origin:left center;">Layout</span>
<span id="t40" class="t" style="top:39.1px;font-size:14.0px;line-height:20px;color:#3b3a39;left:330.0px;transform:scaleX(0.8939);transform-origin:left center;">References</span>
<span id="t41" class="t" style="top:39.1px;font-size:14.0px;line-height:20px;color:#3b3a39;left:422.0px;transform:scaleX(0.9541);transform-origin:left center;">Mailings</span>
<span id="t42" class="t" style="top:39.1px;font-size:14.0px;line-height:20px;color:#3b3a39;left:500.0px;transform:scaleX(0.8713);transform-origin:left center;">Review</span>
<span id="t43" class="t" style="top:39.1px;font-size:14.0px;line-height:20px;color:#3b3a39;left:568.0px;transform:scaleX(0.8972);transform-origin:left center;">View</span>
<span id="t44" class="t" style="top:39.1px;font-size:14.0px;line-height:20px;color:#3b3a39;left:623.0px;transform:scaleX(0.9376);transform-origin:left center;">Help</span>
<span id="t45" class="t" style="top:39.1px;font-size:14.0px;line-height:20px;color:#3b3a39;left:681.0px;transform:scaleX(0.8953);transform-origin:left center;">Nitro PDF Pro</span>
<span id="t46" class="t" style="top:39.1px;font-size:14.0px;line-height:20px;color:#252423;left:68.0px;transform:scaleX(0.9904);transform-origin:left center;-webkit-text-stroke:0.5px #252423;">Home</span>
<div class="b" style="left:68px;top:59px;width:38px;height:3px;background:#2b579a;border-radius:1px;"></div>
<div class="b" style="left:1267px;top:37px;width:81px;height:24px;background:#fff;border:1px solid #7a7876;border-radius:4px;"></div>
<svg class="b" style="left:1273px;top:41.5px;" width="16" height="16" viewBox="0 0 16 16"><path d="M6.4 4.6 H2.6 V13.4 H12.4 V10.6" fill="none" stroke="#2b579a" stroke-width="1.2"/><path d="M5.2 10.6 C5.6 7.4 8 5.8 11 5.8 H13.6" fill="none" stroke="#2b579a" stroke-width="1.2"/><path d="M10.6 2.6 L13.8 5.8 L10.6 9" fill="none" stroke="#2b579a" stroke-width="1.2"/></svg>
<span id="t47" class="t" style="top:39.1px;font-size:14.0px;line-height:20px;color:#2b579a;left:1290.5px;transform:scaleX(0.9368);transform-origin:left center;-webkit-text-stroke:0.45px #2b579a;">Share</span>
<svg class="b" style="left:1336px;top:46.5px;" width="8" height="6" viewBox="0 0 8 6"><path d="M1 1.35 L4 4.35 L7 1.35" fill="none" stroke="#2b579a" stroke-width="1.2"/></svg>
<svg class="b" style="left:17px;top:71px;" width="30" height="33" viewBox="0 0 30 33"><rect x="1.6" y="4.6" width="19" height="23" rx="1" fill="#fdf1dc" stroke="#e8912d" stroke-width="1.6"/><path d="M6.5 6.6 V4.2 H9 C9 0.6 13.4 0.6 13.4 4.2 H16 V6.6 Z" fill="#f3f2f1" stroke="#605e5c" stroke-width="1"/><rect x="14.5" y="12.5" width="13" height="18" fill="#fff" stroke="#3b3a39" stroke-width="1.1"/></svg>
<span id="t48" class="t" style="top:103.0px;font-size:13.3px;line-height:19px;color:#3b3a39;left:15.0px;transform:scaleX(0.8379);transform-origin:left center;">Paste</span>
<svg class="b" style="left:24.9px;top:125.9px;" width="7.2" height="5.2" viewBox="0 0 7.2 5.2"><path d="M1 1.17 L3.6 3.77 L6.2 1.17" fill="none" stroke="#444" stroke-width="1.1"/></svg>
<svg class="b" style="left:54px;top:71px;" width="14" height="17" viewBox="0 0 14 17"><path d="M3.4 1 L9.6 11.4 M10.6 1 L4.4 11.4" stroke="#a19f9d" stroke-width="1.1" fill="none"/><circle cx="3.6" cy="13.2" r="2" fill="none" stroke="#a19f9d" stroke-width="1.1"/><circle cx="10.4" cy="13.2" r="2" fill="none" stroke="#a19f9d" stroke-width="1.1"/></svg>
<span id="t49" class="t" style="top:69.5px;font-size:13.3px;line-height:19px;color:#a19f9d;left:73.0px;transform:scaleX(0.8936);transform-origin:left center;">Cut</span>
<svg class="b" style="left:52px;top:95px;" width="18" height="18" viewBox="0 0 18 18"><path d="M4.6 3.4 V1.6 H1.6 V13.6 H4.6" fill="none" stroke="#a19f9d" stroke-width="1.1"/><path d="M5.6 3.6 H12 L16.4 8 V16.4 H5.6 Z" fill="none" stroke="#a19f9d" stroke-width="1.1"/><path d="M12 3.6 V8 H16.4" fill="none" stroke="#a19f9d" stroke-width="1.1"/><path d="M8.4 10.6 H13.6 M8.4 13.2 H13.6" stroke="#a19f9d" stroke-width="1.1"/></svg>
<span id="t50" class="t" style="top:93.8px;font-size:13.3px;line-height:19px;color:#a19f9d;left:73.0px;transform:scaleX(0.8858);transform-origin:left center;">Copy</span>
<svg class="b" style="left:52px;top:119px;" width="18" height="18" viewBox="0 0 18 18"><path d="M9.2 7 L14 2.2 Q15 1.2 16 2.2 Q17 3.2 16 4.2 L11.4 9" fill="#fff" stroke="#3b3a39" stroke-width="1.1"/><path d="M7.2 5.4 L12.8 11 L10.6 13 L5 7.4 Z" fill="#fff" stroke="#3b3a39" stroke-width="1.1"/><path d="M4.6 7.8 L10.2 13.4 C8 16.4 5 17.2 3 17 C2 15 1.6 10.6 4.6 7.8 Z" fill="#f7a64a" stroke="#e8812d" stroke-width="1"/></svg>
<span id="t51" class="t" style="top:117.8px;font-size:13.3px;line-height:19px;color:#3b3a39;left:73.0px;transform:scaleX(0.8813);transform-origin:left center;">Format Painter</span>
<span id="t52" class="t" style="top:141.8px;font-size:13.3px;line-height:19px;color:#3b3a39;left:48.0px;transform:scaleX(0.8960);transform-origin:left center;">Clipboard</span>
<svg class="b" style="left:153px;top:149px;" width="8" height="8" viewBox="0 0 8 8"><path d="M0.6 4.8 V0.6 H4.8" fill="none" stroke="#4a4846" stroke-width="1.15"/><path d="M2.6 2.6 L7.4 7.4 M7.4 3.4 V7.4 H3.4" fill="none" stroke="#4a4846" stroke-width="1.15"/></svg>
<div class="b" style="left:165px;top:68px;width:1px;height:88px;background:#b3b0ad;"></div>
<div class="b" style="left:173px;top:76px;width:110px;height:23px;background:#fff;border:1px solid #c8c6c4;"></div>
<span id="t53" class="t" style="top:78.0px;font-size:13.3px;line-height:19px;color:#201f1e;left:176.0px;transform:scaleX(0.8605);transform-origin:left center;">Segoe UI Emoji</span>
<svg class="b" style="left:273.9px;top:85.9px;" width="7.2" height="5.2" viewBox="0 0 7.2 5.2"><path d="M1 1.17 L3.6 3.77 L6.2 1.17" fill="none" stroke="#444" stroke-width="1.1"/></svg>
<div class="b" style="left:286px;top:76px;width:42px;height:23px;background:#fff;border:1px solid #c8c6c4;"></div>
<span id="t54" class="t" style="top:78.0px;font-size:13.3px;line-height:19px;color:#201f1e;left:290.0px;transform:scaleX(0.7772);transform-origin:left center;">13</span>
<svg class="b" style="left:318.4px;top:85.9px;" width="7.2" height="5.2" viewBox="0 0 7.2 5.2"><path d="M1 1.17 L3.6 3.77 L6.2 1.17" fill="none" stroke="#444" stroke-width="1.1"/></svg>
<span id="t55" class="t" style="top:74.0px;font-size:18px;line-height:25px;color:#3b3a39;left:334.5px;transform:scaleX(0.9571);transform-origin:left center;-webkit-text-stroke:0.45px #f3f2f1;">A</span>
<svg class="b" style="left:344.5px;top:79px;" width="7" height="5" viewBox="0 0 7 5"><path d="M0.8 4 L3.4 1.2 L6 4" fill="none" stroke="#1e88d4" stroke-width="1.2"/></svg>
<span id="t56" class="t" style="top:77.2px;font-size:14.4px;line-height:20px;color:#3b3a39;left:360.2px;transform:scaleX(0.9574);transform-origin:left center;-webkit-text-stroke:0.2px #f3f2f1;">A</span>
<svg class="b" style="left:368px;top:79.5px;" width="7" height="5" viewBox="0 0 7 5"><path d="M0.8 1 L3.4 3.8 L6 1" fill="none" stroke="#1e88d4" stroke-width="1.2"/></svg>
<div class="b" style="left:381px;top:77px;width:1px;height:21px;background:#d2d0ce;"></div>
<span id="t57" class="t" style="top:77.9px;font-size:13.8px;line-height:19px;color:#3b3a39;left:389.5px;transform:scaleX(0.9473);transform-origin:left center;">Aa</span>
<svg class="b" style="left:408.9px;top:85.9px;" width="7.2" height="5.2" viewBox="0 0 7.2 5.2"><path d="M1 1.17 L3.6 3.77 L6.2 1.17" fill="none" stroke="#444" stroke-width="1.1"/></svg>
<div class="b" style="left:426px;top:77px;width:1px;height:21px;background:#d2d0ce;"></div>
<span id="t58" class="t" style="top:74.0px;font-size:18px;line-height:25px;color:#3b3a39;left:434.0px;transform:scaleX(0.8739);transform-origin:left center;-webkit-text-stroke:0.45px #f3f2f1;">A</span>
<svg class="b" style="left:439px;top:84px;" width="12" height="12" viewBox="0 0 12 12"><g transform="translate(6.2 6) rotate(-42)"><rect x="-4.6" y="-2.6" width="9.2" height="5.2" fill="#f3f2f1" stroke="#a33fb4" stroke-width="1.3"/><path d="M-1.4 -2.6 V2.6" stroke="#a33fb4" stroke-width="1"/></g></svg>
<div class="b" style="left:173px;top:108px;width:22px;height:22.4px;background:#c8c6c4;border:1px solid #979593;"></div>
<span id="t59" class="t" style="top:108.3px;font-size:14.5px;line-height:20px;color:#201f1e;left:179.2px;font-weight:700;transform:scaleX(0.9061);transform-origin:left center;">B</span>
<span id="t60" class="t" style="top:107.8px;font-size:15px;line-height:21px;color:#3b3a39;left:203.5px;font-family:'Liberation Serif','DejaVu Serif',serif;font-style:italic;transform:scaleX(1.2000);transform-origin:left center;">I</span>
<span id="t61" class="t" style="top:108.0px;font-size:14px;line-height:20px;color:#3b3a39;left:226.0px;transform:scaleX(0.9383);transform-origin:left center;">U</span>
<div class="b" style="left:226px;top:126px;width:10px;height:1px;background:#3b3a39;"></div>
<svg class="b" style="left:244.9px;top:117.9px;" width="7.2" height="5.2" viewBox="0 0 7.2 5.2"><path d="M1 1.17 L3.6 3.77 L6.2 1.17" fill="none" stroke="#444" stroke-width="1.1"/></svg>
<span id="t62" class="t" style="top:109.3px;font-size:13.3px;line-height:19px;color:#3b3a39;left:265.0px;transform:scaleX(0.9124);transform-origin:left center;">ab</span>
<div class="b" style="left:263px;top:120px;width:17px;height:1px;background:#3b3a39;"></div>
<span id="t63" class="t" style="top:107.8px;font-size:15px;line-height:21px;color:#3b3a39;left:291.0px;font-weight:700;transform:scaleX(0.8989);transform-origin:left center;">x</span>
<span id="t64" class="t" style="top:118.3px;font-size:7.5px;line-height:10px;color:#1e88d4;left:299.5px;font-weight:700;">2</span>
<span id="t65" class="t" style="top:107.8px;font-size:15px;line-height:21px;color:#3b3a39;left:315.0px;font-weight:700;transform:scaleX(0.8989);transform-origin:left center;">x</span>
<span id="t66" class="t" style="top:106.8px;font-size:7.5px;line-height:10px;color:#1e88d4;left:323.5px;font-weight:700;">2</span>
<div class="b" style="left:334px;top:108px;width:1px;height:22px;background:#d2d0ce;"></div>
<span id="t67" class="t" style="top:104.2px;font-size:19px;line-height:27px;color:#fff;left:343.0px;font-weight:700;transform:scaleX(1.0193);transform-origin:left center;-webkit-text-stroke:1.5px #1e80d0;">A</span>
<svg class="b" style="left:361.9px;top:117.9px;" width="7.2" height="5.2" viewBox="0 0 7.2 5.2"><path d="M1 1.17 L3.6 3.77 L6.2 1.17" fill="none" stroke="#444" stroke-width="1.1"/></svg>
<svg class="b" style="left:381px;top:108px;" width="17" height="14" viewBox="0 0 17 14"><path d="M4.2 8.4 L10.6 2 Q11.6 1 12.6 2 L14 3.4 Q15 4.4 14 5.4 L7.6 11.8 Z" fill="#fff" stroke="#605e5c" stroke-width="1.1"/><path d="M4.2 8.4 L7.6 11.8 L5.6 12.8 H2.2 Z" fill="#605e5c"/></svg>
<div class="b" style="left:380px;top:122.8px;width:16px;height:4px;background:#ffff00;"></div>
<svg class="b" style="left:400.9px;top:117.9px;" width="7.2" height="5.2" viewBox="0 0 7.2 5.2"><path d="M1 1.17 L3.6 3.77 L6.2 1.17" fill="none" stroke="#444" stroke-width="1.1"/></svg>
<span id="t68" class="t" style="top:105.9px;font-size:14.8px;line-height:21px;color:#3b3a39;left:421.7px;transform:scaleX(1.0633);transform-origin:left center;-webkit-text-stroke:0.2px #f3f2f1;">A</span>
<div class="b" style="left:419px;top:122.8px;width:16px;height:4px;background:#fa0505;"></div>
<svg class="b" style="left:440.4px;top:117.9px;" width="7.2" height="5.2" viewBox="0 0 7.2 5.2"><path d="M1 1.17 L3.6 3.77 L6.2 1.17" fill="none" stroke="#444" stroke-width="1.1"/></svg>
<span id="t69" class="t" style="top:141.8px;font-size:13.3px;line-height:19px;color:#3b3a39;left:292.5px;transform:scaleX(0.8831);transform-origin:left center;">Font</span>
<svg class="b" style="left:449px;top:149px;" width="8" height="8" viewBox="0 0 8 8"><path d="M0.6 4.8 V0.6 H4.8" fill="none" stroke="#4a4846" stroke-width="1.15"/><path d="M2.6 2.6 L7.4 7.4 M7.4 3.4 V7.4 H3.4" fill="none" stroke="#4a4846" stroke-width="1.15"/></svg>
<div class="b" style="left:460px;top:68px;width:1px;height:88px;background:#b3b0ad;"></div>
<svg class="b" style="left:472px;top:77px;" width="18" height="18" viewBox="0 0 18 18"><path d="M1 3.5 H10.5" stroke="#3b3a39" stroke-width="1.1"/><path d="M1 9.5 H10.5" stroke="#3b3a39" stroke-width="1.1"/><path d="M1 15.5 H10.5" stroke="#3b3a39" stroke-width="1.1"/><rect x="13" y="2" width="3" height="3" fill="#1e88d4"/><rect x="13" y="8" width="3" height="3" fill="#1e88d4"/><rect x="13" y="14" width="3" height="3" fill="#1e88d4"/></svg>
<svg class="b" style="left:493.9px;top:85.0px;" width="7.2" height="5.2" viewBox="0 0 7.2 5.2"><path d="M1 1.17 L3.6 3.77 L6.2 1.17" fill="none" stroke="#444" stroke-width="1.1"/></svg>
<svg class="b" style="left:511px;top:77px;" width="18" height="18" viewBox="0 0 18 18"><path d="M1 3.5 H10.5" stroke="#3b3a39" stroke-width="1.1"/><path d="M1 9.5 H10.5" stroke="#3b3a39" stroke-width="1.1"/><path d="M1 15.5 H10.5" stroke="#3b3a39" stroke-width="1.1"/><path d="M13.4 2.4 L14.6 1.6 V5.4 M13 8 Q14.6 7 15.4 8.2 Q15.4 9.6 13 11.2 H15.8 M13 13.4 H15.4 L14.2 15 Q15.8 15.2 15.4 16.4 Q14.6 17.4 13 16.8" fill="none" stroke="#1e88d4" stroke-width="0.9"/></svg>
<svg class="b" style="left:532.9px;top:85.0px;" width="7.2" height="5.2" viewBox="0 0 7.2 5.2"><path d="M1 1.17 L3.6 3.77 L6.2 1.17" fill="none" stroke="#444" stroke-width="1.1"/></svg>
<svg class="b" style="left:549px;top:77px;" width="18" height="18" viewBox="0 0 18 18"><path d="M1.5 3.5 H11.5" stroke="#3b3a39" stroke-width="1.1"/><path d="M1.5 9.5 H7.5" stroke="#3b3a39" stroke-width="1.1"/><path d="M1.5 15.5 H5.5" stroke="#3b3a39" stroke-width="1.1"/><path d="M14 2.6 L15.4 1.6 V5.6" fill="none" stroke="#1e88d4" stroke-width="1"/><path d="M10.6 8.2 Q13 7.4 13 9 V11.4 M13 9.8 Q10.4 9.6 10.4 10.8 Q10.8 11.8 13 10.8" fill="none" stroke="#1e88d4" stroke-width="1"/><path d="M8.2 12.6 V13.4 M8.2 14.6 V17.4" stroke="#1e88d4" stroke-width="1.1"/></svg>
<svg class="b" style="left:569.9px;top:85.0px;" width="7.2" height="5.2" viewBox="0 0 7.2 5.2"><path d="M1 1.17 L3.6 3.77 L6.2 1.17" fill="none" stroke="#444" stroke-width="1.1"/></svg>
<div class="b" style="left:587px;top:77px;width:1px;height:21px;background:#d2d0ce;"></div>
<svg class="b" style="left:595px;top:78px;" width="18" height="16" viewBox="0 0 18 16"><path d="M1 2.5 H16" stroke="#3b3a39" stroke-width="1.1"/><path d="M1 6.5 H6.5" stroke="#3b3a39" stroke-width="1.1"/><path d="M1 10.5 H6.5" stroke="#3b3a39" stroke-width="1.1"/><path d="M1 14.5 H16" stroke="#3b3a39" stroke-width="1.1"/><path d="M8.6 8.5 H15.6 M13 5.8 L15.8 8.5 L13 11.2" fill="none" stroke="#1e88d4" stroke-width="1.1"/></svg>
<svg class="b" style="left:619px;top:78px;" width="18" height="16" viewBox="0 0 18 16"><path d="M1 2.5 H16" stroke="#3b3a39" stroke-width="1.1"/><path d="M1 6.5 H6.5" stroke="#3b3a39" stroke-width="1.1"/><path d="M1 10.5 H6.5" stroke="#3b3a39" stroke-width="1.1"/><path d="M1 14.5 H16" stroke="#3b3a39" stroke-width="1.1"/><path d="M8.6 8.5 H15.8 M11.4 5.8 L8.6 8.5 L11.4 11.2" fill="none" stroke="#1e88d4" stroke-width="1.1"/></svg>
<div class="b" style="left:642px;top:77px;width:1px;height:21px;background:#d2d0ce;"></div>
<svg class="b" style="left:650px;top:81px;" width="8" height="10" viewBox="0 0 8 10"><path d="M1.6 1.6 L5.4 5 L1.6 8.4" fill="none" stroke="#1e88d4" stroke-width="1.3"/></svg>
<span id="t70" class="t" style="top:77.6px;font-size:12.5px;line-height:18px;color:#3b3a39;left:657.4px;font-weight:700;transform:scaleX(1.0787);transform-origin:left center;">¶</span>
<div class="b" style="left:671px;top:76px;width:20.5px;height:22px;background:#c8c6c4;border:1px solid #979593;"></div>
<span id="t71" class="t" style="top:77.6px;font-size:12.5px;line-height:18px;color:#3b3a39;left:675.5px;font-weight:700;transform:scaleX(1.0787);transform-origin:left center;">¶</span>
<svg class="b" style="left:684px;top:81px;" width="8" height="10" viewBox="0 0 8 10"><path d="M5.4 1.6 L1.6 5 L5.4 8.4" fill="none" stroke="#1e88d4" stroke-width="1.3"/></svg>
<div class="b" style="left:698px;top:77px;width:1px;height:21px;background:#d2d0ce;"></div>
<span id="t72" class="t" style="top:74.3px;font-size:10px;line-height:14px;color:#1e88d4;left:704.5px;transform:scaleX(1.0492);transform-origin:left center;">A</span>
<span id="t73" class="t" style="top:83.9px;font-size:10px;line-height:14px;color:#3b3a39;left:704.5px;transform:scaleX(1.0639);transform-origin:left center;">Z</span>
<svg class="b" style="left:712px;top:78px;" width="10" height="18" viewBox="0 0 10 18"><path d="M5 1.4 V15.6 M1.4 12 L5 15.8 L8.6 12" fill="none" stroke="#3b3a39" stroke-width="1.1"/></svg>
<div class="b" style="left:729px;top:77px;width:1px;height:21px;background:#d2d0ce;"></div>
<span id="t74" class="t" style="top:74.3px;font-size:17.5px;line-height:24px;color:#3b3a39;left:739.0px;font-weight:700;transform:scaleX(1.0273);transform-origin:left center;">¶</span>
<svg class="b" style="left:472px;top:110px;" width="18" height="18" viewBox="0 0 18 18"><path d="M1 2.5 H16" stroke="#3b3a39" stroke-width="1.1"/><path d="M1 6.5 H10.5" stroke="#3b3a39" stroke-width="1.1"/><path d="M1 10.5 H16" stroke="#3b3a39" stroke-width="1.1"/><path d="M1 14.5 H10.5" stroke="#3b3a39" stroke-width="1.1"/></svg>
<svg class="b" style="left:495px;top:110px;" width="18" height="18" viewBox="0 0 18 18"><path d="M1 2.5 H17" stroke="#3b3a39" stroke-width="1.1"/><path d="M4 6.5 H14" stroke="#3b3a39" stroke-width="1.1"/><path d="M1 10.5 H17" stroke="#3b3a39" stroke-width="1.1"/><path d="M4 14.5 H14" stroke="#3b3a39" stroke-width="1.1"/></svg>
<div class="b" style="left:517px;top:108px;width:22px;height:22.6px;background:#c8c6c4;border:1px solid #979593;"></div>
<svg class="b" style="left:519px;top:110px;" width="18" height="18" viewBox="0 0 18 18"><path d="M2 2.5 H17" stroke="#3b3a39" stroke-width="1.1"/><path d="M7.5 6.5 H17" stroke="#3b3a39" stroke-width="1.1"/><path d="M2 10.5 H17" stroke="#3b3a39" stroke-width="1.1"/><path d="M7.5 14.5 H17" stroke="#3b3a39" stroke-width="1.1"/></svg>
<svg class="b" style="left:544px;top:110px;" width="18" height="18" viewBox="0 0 18 18"><path d="M1 2.5 H15.5" stroke="#3b3a39" stroke-width="1.1"/><path d="M1 6.5 H15.5" stroke="#3b3a39" stroke-width="1.1"/><path d="M1 10.5 H15.5" stroke="#3b3a39" stroke-width="1.1"/><path d="M1 14.5 H15.5" stroke="#3b3a39" stroke-width="1.1"/></svg>
<svg class="b" style="left:563.9px;top:117.9px;" width="7.2" height="5.2" viewBox="0 0 7.2 5.2"><path d="M1 1.17 L3.6 3.77 L6.2 1.17" fill="none" stroke="#444" stroke-width="1.1"/></svg>
<div class="b" style="left:581px;top:108px;width:1px;height:22px;background:#d2d0ce;"></div>
<svg class="b" style="left:588px;top:108px;" width="19" height="20" viewBox="0 0 19 20"><path d="M8.5 4.5 H17" stroke="#3b3a39" stroke-width="1.1"/><path d="M8.5 10.5 H17" stroke="#3b3a39" stroke-width="1.1"/><path d="M8.5 16.5 H17" stroke="#3b3a39" stroke-width="1.1"/><path d="M3.5 4 V17.4 M1.2 6.4 L3.5 4 L5.8 6.4 M1.2 15 L3.5 17.4 L5.8 15" fill="none" stroke="#1e88d4" stroke-width="1.1"/></svg>
<svg class="b" style="left:609.4px;top:117.9px;" width="7.2" height="5.2" viewBox="0 0 7.2 5.2"><path d="M1 1.17 L3.6 3.77 L6.2 1.17" fill="none" stroke="#444" stroke-width="1.1"/></svg>
<div class="b" style="left:626px;top:108px;width:1px;height:22px;background:#d2d0ce;"></div>
<svg class="b" style="left:634px;top:108px;" width="18" height="19" viewBox="0 0 18 19"><path d="M4 8.4 L8.6 2.2 L13.4 6 L9 12.4 Z" fill="#fff" stroke="#3b3a39" stroke-width="1.1"/><path d="M8.2 2.8 C7.4 0.6 9.8 0.4 10 2.6" fill="none" stroke="#3b3a39" stroke-width="1"/><path d="M13.6 5.6 C15.6 7 15.6 9.6 14.6 11 C13.4 9.6 13.2 7.4 13.6 5.6 Z" fill="#1e88d4"/><rect x="1.5" y="13.5" width="14.5" height="3.6" fill="#fff" stroke="#8a8886" stroke-width="1"/></svg>
<svg class="b" style="left:655.9px;top:117.9px;" width="7.2" height="5.2" viewBox="0 0 7.2 5.2"><path d="M1 1.17 L3.6 3.77 L6.2 1.17" fill="none" stroke="#444" stroke-width="1.1"/></svg>
<svg class="b" style="left:672px;top:109px;" width="18" height="19" viewBox="0 0 18 19"><path d="M1.5 1.5 H15.5 V15 M1.5 1.5 V15 M8.5 1.5 V15 M1.5 8.2 H15.5" fill="none" stroke="#605e5c" stroke-width="1" stroke-dasharray="1 1.2"/><path d="M1 16.2 H16" stroke="#201f1e" stroke-width="1.6"/></svg>
<svg class="b" style="left:694.4px;top:117.9px;" width="7.2" height="5.2" viewBox="0 0 7.2 5.2"><path d="M1 1.17 L3.6 3.77 L6.2 1.17" fill="none" stroke="#444" stroke-width="1.1"/></svg>
<span id="t75" class="t" style="top:141.8px;font-size:13.3px;line-height:19px;color:#3b3a39;left:577.5px;transform:scaleX(0.8292);transform-origin:left center;">Paragraph</span>
<svg class="b" style="left:752px;top:149px;" width="8" height="8" viewBox="0 0 8 8"><path d="M0.6 4.8 V0.6 H4.8" fill="none" stroke="#4a4846" stroke-width="1.15"/><path d="M2.6 2.6 L7.4 7.4 M7.4 3.4 V7.4 H3.4" fill="none" stroke="#4a4846" stroke-width="1.15"/></svg>
<div class="b" style="left:762px;top:68px;width:1px;height:88px;background:#b3b0ad;"></div>
<div class="b" style="left:772px;top:70.5px;width:378px;height:58.5px;background:#fff;border:1px solid #d2d0ce;"></div>
<div class="b" style="left:774.5px;top:72.5px;width:71px;height:55px;background:#fff;border:2.5px solid #c8c6c4;outline:1px solid #979593;"></div>
<div class="b" style="left:781px;top:80px;width:58.5px;height:26px;overflow:hidden"><span id="t76" class="t" style="top:1.3px;font-size:15.2px;line-height:21px;color:#000;left:0.0px;transform:scaleX(0.8481);transform-origin:left center;">AaBbCcDc</span></div>
<span id="t77" class="t" style="top:106.8px;font-size:13.3px;line-height:19px;color:#444;left:785.0px;transform:scaleX(0.9127);transform-origin:left center;">¶ Normal</span>
<div class="b" style="left:852.5px;top:80px;width:58.5px;height:26px;overflow:hidden"><span id="t78" class="t" style="top:1.3px;font-size:15.2px;line-height:21px;color:#000;left:0.0px;transform:scaleX(0.8481);transform-origin:left center;">AaBbCcDc</span></div>
<span id="t79" class="t" style="top:106.8px;font-size:13.3px;line-height:19px;color:#444;left:851.0px;transform:scaleX(0.8434);transform-origin:left center;">¶ No Spac...</span>
<div class="b" style="left:925px;top:74px;width:58px;height:36px;overflow:hidden"><span id="t80" class="t" style="top:2.3px;font-size:21.5px;line-height:30px;color:#2f5496;left:0.0px;transform:scaleX(0.8368);transform-origin:left center;-webkit-text-stroke:0.6px #fff;">AaBbCc</span></div>
<span id="t81" class="t" style="top:106.8px;font-size:13.3px;line-height:19px;color:#444;left:927.5px;transform:scaleX(0.8660);transform-origin:left center;">Heading 1</span>
<div class="b" style="left:996.5px;top:78px;width:58.5px;height:30px;overflow:hidden"><span id="t82" class="t" style="top:1.3px;font-size:17.3px;line-height:24px;color:#2f5496;left:0.0px;transform:scaleX(0.8433);transform-origin:left center;-webkit-text-stroke:0.45px #fff;">AaBbCcD</span></div>
<span id="t83" class="t" style="top:106.8px;font-size:13.3px;line-height:19px;color:#444;left:999.0px;transform:scaleX(0.8907);transform-origin:left center;">Heading 2</span>
<div class="b" style="left:1066px;top:78px;width:62px;height:28px;overflow:hidden"><span id="t84" class="t" style="top:-18.0px;font-size:37.5px;line-height:52px;color:#000;left:3.0px;transform:scaleX(0.7899);transform-origin:left center;-webkit-text-stroke:1.1px #fff;">AaB</span></div>
<span id="t85" class="t" style="top:106.8px;font-size:13.3px;line-height:19px;color:#444;left:1086.5px;transform:scaleX(0.9334);transform-origin:left center;">Title</span>
<div class="b" style="left:1135.5px;top:71px;width:13.5px;height:19px;background:#fff;border:1px solid #e1dfdd;"></div>
<svg class="b" style="left:1139px;top:78px;" width="8" height="6" viewBox="0 0 8 6"><path d="M1 4.4 L3.8 1.6 L6.6 4.4" fill="none" stroke="#c8c6c4" stroke-width="1.1"/></svg>
<div class="b" style="left:1135.5px;top:90px;width:13.5px;height:19px;background:#fff;border:1px solid #979593;"></div>
<svg class="b" style="left:1139px;top:97px;" width="8" height="6" viewBox="0 0 8 6"><path d="M1 1.4 L3.8 4.2 L6.6 1.4" fill="none" stroke="#3b3a39" stroke-width="1.1"/></svg>
<div class="b" style="left:1135.5px;top:109px;width:13.5px;height:19px;background:#fff;border:1px solid #979593;"></div>
<svg class="b" style="left:1139px;top:114px;" width="8" height="10" viewBox="0 0 8 10"><path d="M0.8 1.6 H6.8" stroke="#3b3a39" stroke-width="1.1"/><path d="M1 4.4 L3.8 7.2 L6.6 4.4" fill="none" stroke="#3b3a39" stroke-width="1.1"/></svg>
<span id="t86" class="t" style="top:141.8px;font-size:13.3px;line-height:19px;color:#3b3a39;left:939.5px;transform:scaleX(0.7869);transform-origin:left center;">Styles</span>
<svg class="b" style="left:1149px;top:149px;" width="8" height="8" viewBox="0 0 8 8"><path d="M0.6 4.8 V0.6 H4.8" fill="none" stroke="#4a4846" stroke-width="1.15"/><path d="M2.6 2.6 L7.4 7.4 M7.4 3.4 V7.4 H3.4" fill="none" stroke="#4a4846" stroke-width="1.15"/></svg>
<div class="b" style="left:1161px;top:68px;width:1px;height:88px;background:#b3b0ad;"></div>
<svg class="b" style="left:1172px;top:69px;" width="18" height="18" viewBox="0 0 18 18"><circle cx="10.6" cy="6.8" r="5" fill="none" stroke="#3b3a39" stroke-width="1.1"/><path d="M7 10.6 L1.4 16.4" stroke="#3b3a39" stroke-width="1.3"/></svg>
<span id="t87" class="t" style="top:67.8px;font-size:13.3px;line-height:19px;color:#3b3a39;left:1191.5px;transform:scaleX(0.8502);transform-origin:left center;">Find</span>
<svg class="b" style="left:1223.4px;top:75.9px;" width="7.2" height="5.2" viewBox="0 0 7.2 5.2"><path d="M1 1.17 L3.6 3.77 L6.2 1.17" fill="none" stroke="#444" stroke-width="1.1"/></svg>
<svg class="b" style="left:1171px;top:92px;" width="19" height="19" viewBox="0 0 19 19"><path d="M6.4 6.6 L2.6 10.2 L6.4 13.8 M2.8 10.2 H8 Q10 10.2 10 8.4" fill="none" stroke="#1e88d4" stroke-width="1.2"/></svg>
<span id="t88" class="t" style="top:88.1px;font-size:11px;line-height:15px;color:#a33fb4;left:1179.5px;font-weight:700;">b</span>
<span id="t89" class="t" style="top:97.3px;font-size:11px;line-height:15px;color:#1e88d4;left:1183.5px;font-weight:700;">c</span>
<span id="t90" class="t" style="top:91.3px;font-size:13.3px;line-height:19px;color:#3b3a39;left:1191.5px;transform:scaleX(0.8300);transform-origin:left center;">Replace</span>
<svg class="b" style="left:1173px;top:116px;" width="13" height="18" viewBox="0 0 13 18"><path d="M1.6 1.4 V14 L4.8 11 L7.2 16.2 L9.2 15.2 L6.8 10.2 H11 Z" fill="#fff" stroke="#3b3a39" stroke-width="1.1" stroke-linejoin="round"/></svg>
<span id="t91" class="t" style="top:114.8px;font-size:13.3px;line-height:19px;color:#3b3a39;left:1191.5px;transform:scaleX(0.8250);transform-origin:left center;">Select</span>
<svg class="b" style="left:1224.4px;top:122.9px;" width="7.2" height="5.2" viewBox="0 0 7.2 5.2"><path d="M1 1.17 L3.6 3.77 L6.2 1.17" fill="none" stroke="#444" stroke-width="1.1"/></svg>
<span id="t92" class="t" style="top:141.8px;font-size:13.3px;line-height:19px;color:#3b3a39;left:1185.5px;transform:scaleX(0.8728);transform-origin:left center;">Editing</span>
<div class="b" style="left:1247px;top:68px;width:1px;height:88px;background:#b3b0ad;"></div>
<svg class="b" style="left:1264px;top:71px;" width="30" height="30" viewBox="0 0 30 30"><rect x="1" y="1" width="27.6" height="27.6" fill="none" stroke="#d24726" stroke-width="1.2"/><rect x="4.6" y="4.6" width="9" height="9" fill="none" stroke="#d24726" stroke-width="1.2"/><rect x="16" y="4.6" width="9" height="9" fill="none" stroke="#d24726" stroke-width="1.2"/><rect x="4.6" y="16" width="9" height="9" fill="none" stroke="#d24726" stroke-width="1.2"/><rect x="16" y="16" width="9" height="9" fill="none" stroke="#d24726" stroke-width="1.2"/></svg>
<span id="t93" class="t" style="top:102.3px;font-size:13.3px;line-height:19px;color:#3b3a39;left:1258.5px;transform:scaleX(0.9203);transform-origin:left center;">Add-ins</span>
<span id="t94" class="t" style="top:141.8px;font-size:13.3px;line-height:19px;color:#3b3a39;left:1259.0px;transform:scaleX(0.8649);transform-origin:left center;">Add-ins</span>
<div class="b" style="left:1310px;top:68px;width:1px;height:88px;background:#b3b0ad;"></div>
<svg class="b" style="left:1340px;top:149px;" width="12" height="8" viewBox="0 0 12 8"><path d="M1.4 6.4 L6 1.8 L10.6 6.4" fill="none" stroke="#3b3a39" stroke-width="1.2"/></svg>
<div class="b" style="left:0px;top:706px;width:1360px;height:22px;background:#f3f2f1;"></div>
<div class="b" style="left:0px;top:706px;width:1360px;height:1px;background:#e1dfdd;"></div>
<span id="t95" class="t" style="top:707.1px;font-size:13.3px;line-height:19px;color:#323130;left:7.0px;transform:scaleX(0.8353);transform-origin:left center;">Page 1 of 94</span>
<span id="t96" class="t" style="top:707.1px;font-size:13.3px;line-height:19px;color:#605e5c;left:90.0px;transform:scaleX(0.8509);transform-origin:left center;">8221 words</span>
<span id="t97" class="t" style="top:707.1px;font-size:13.3px;line-height:19px;color:#484644;left:168.5px;transform:scaleX(0.8493);transform-origin:left center;">English (United States)</span>
<svg class="b" style="left:302px;top:708px;" width="18" height="18" viewBox="0 0 18 18"><circle cx="8" cy="3.2" r="1.8" fill="none" stroke="#3b3a39" stroke-width="1.1"/><path d="M1.6 6.4 L6 7.6 V11 L3 16.6 M14.4 6.4 L10 7.6 V11 L11 13 M6 7.6 H10" fill="none" stroke="#3b3a39" stroke-width="1.1" stroke-linecap="round"/><path d="M10.2 11.6 L15.8 17 M15.8 11.6 L10.2 17" stroke="#3b3a39" stroke-width="1.2"/></svg>
<span id="t98" class="t" style="top:707.1px;font-size:13.3px;line-height:19px;color:#484644;left:321.0px;transform:scaleX(0.8500);transform-origin:left center;">Accessibility: Investigate</span>
<svg class="b" style="left:1000px;top:709px;" width="16" height="17" viewBox="0 0 16 17"><path d="M1 4.6 V1 H4.6 M11.4 1 H15 V4.6 M15 12.4 V16 H11.4 M4.6 16 H1 V12.4" fill="none" stroke="#3b3a39" stroke-width="1.1"/><path d="M4.4 3.4 H9 L11.6 6 V13.6 H4.4 Z M9 3.4 V6 H11.6" fill="none" stroke="#3b3a39" stroke-width="1.1"/></svg>
<span id="t99" class="t" style="top:707.1px;font-size:13.3px;line-height:19px;color:#484644;left:1018.5px;transform:scaleX(0.8007);transform-origin:left center;">Focus</span>
<svg class="b" style="left:1072px;top:709px;" width="15" height="15" viewBox="0 0 15 15"><path d="M7.4 2.4 V13.4 M7.4 2.4 Q4.2 0.8 1 1.8 V12.8 Q4.2 11.8 7.4 13.4 Q10.6 11.8 13.8 12.8 V1.8 Q10.6 0.8 7.4 2.4" fill="none" stroke="#3b3a39" stroke-width="1.1"/><path d="M2.8 4.4 H5.8 M2.8 6.8 H5.8 M2.8 9.2 H5.8 M9 4.4 H12 M9 6.8 H12 M9 9.2 H12" stroke="#3b3a39" stroke-width="0.9"/></svg>
<div class="b" style="left:1100px;top:707px;width:40px;height:21px;background:#c8c6c4;"></div>
<svg class="b" style="left:1113px;top:709px;" width="14" height="17" viewBox="0 0 14 17"><rect x="1" y="1" width="11.4" height="14.4" fill="#fff" stroke="#3b3a39" stroke-width="1.1"/><path d="M3 4 H10.4 M3 6.4 H10.4 M3 8.8 H10.4 M3 11.2 H10.4 M3 13.4 H10.4" stroke="#3b3a39" stroke-width="0.9"/></svg>
<svg class="b" style="left:1153px;top:709px;" width="16" height="17" viewBox="0 0 16 17"><path d="M12.4 6 V1 H1 V14.4 H6.6" fill="none" stroke="#3b3a39" stroke-width="1.1"/><path d="M3 3.6 H10.4 M3 6 H10.4 M3 8.4 H6.6 M3 10.8 H6" stroke="#3b3a39" stroke-width="0.9"/><circle cx="10.6" cy="11.6" r="4" fill="#f3f2f1" stroke="#3b3a39" stroke-width="1.1"/><path d="M6.6 11.6 H14.6 M10.6 7.6 V15.6" stroke="#3b3a39" stroke-width="0.8"/></svg>
<div class="b" style="left:1186px;top:716.5px;width:8px;height:1.2px;background:#605e5c;"></div>
<div class="b" style="left:1198.5px;top:716.5px;width:100px;height:1px;background:#605e5c;"></div>
<div class="b" style="left:1248.5px;top:714px;width:1px;height:6px;background:#605e5c;"></div>
<div class="b" style="left:1226px;top:711px;width:4.5px;height:12.5px;background:#444;"></div>
<div class="b" style="left:1304px;top:716.5px;width:8px;height:1.2px;background:#605e5c;"></div>
<div class="b" style="left:1307.4px;top:713px;width:1.2px;height:8px;background:#605e5c;"></div>
<span id="t100" class="t" style="top:706.5px;font-size:13.3px;line-height:19px;color:#605e5c;left:1325.0px;transform:scaleX(0.7512);transform-origin:left center;">60%</span>
<div class="b" style="left:0px;top:728px;width:1360px;height:40px;background:#000;"></div>
<div class="b" style="left:490px;top:728px;width:48px;height:40px;background:#333;"></div>
<div class="b" style="left:151px;top:766px;width:32px;height:2px;background:#76b9ed;"></div>
<div class="b" style="left:183px;top:766px;width:7px;height:2px;background:#4d7fa8;"></div>
<div class="b" style="left:249px;top:766px;width:32px;height:2px;background:#76b9ed;"></div>
<div class="b" style="left:281px;top:766px;width:7px;height:2px;background:#4d7fa8;"></div>
<div class="b" style="left:445px;top:766px;width:40px;height:2px;background:#76b9ed;"></div>
<div class="b" style="left:490px;top:766px;width:48px;height:2px;background:#76b9ed;"></div>
<svg class="b" style="left:15px;top:739px;" width="18" height="18" viewBox="0 0 18 18"><path d="M0.5 2.8 L7.4 1.8 V8.4 H0.5 Z M8.4 1.7 L17 0.4 V8.4 H8.4 Z M0.5 9.4 H7.4 V16 L0.5 15 Z M8.4 9.4 H17 V17.4 L8.4 16.2 Z" fill="#fff"/></svg>
<svg class="b" style="left:63px;top:739px;" width="18" height="18" viewBox="0 0 18 18"><circle cx="11" cy="7" r="5.4" fill="none" stroke="#fff" stroke-width="1.4"/><path d="M7.2 11 L1 17.2" stroke="#fff" stroke-width="1.5"/></svg>
<svg class="b" style="left:110px;top:739px;" width="20" height="18" viewBox="0 0 20 18"><path d="M2 2.4 H12.6 M2 16 H12.6" stroke="#fff" stroke-width="1.3"/><rect x="2.2" y="5" width="10.2" height="8.4" fill="none" stroke="#fff" stroke-width="1.3"/><path d="M16.4 1.8 V4.2 M16.4 9.4 V16.6" stroke="#fff" stroke-width="1.3"/><rect x="15.2" y="5.6" width="2.8" height="2.6" fill="#fff"/></svg>
<svg class="b" style="left:157px;top:735px;" width="26" height="26" viewBox="0 0 26 26"><circle cx="13" cy="13" r="12" fill="#fff"/><path d="M13 13 L2.6 7 A12 12 0 0 1 23.4 7 Z" fill="#ea4335"/><path d="M13 13 L23.4 7 A12 12 0 0 1 13 25 Z" fill="#fbbc05"/><path d="M13 13 L13 25 A12 12 0 0 1 2.6 7 Z" fill="#34a853"/><path d="M13 7.2 H23.5 A12 12 0 0 0 2.6 7 L7.6 15 Z" fill="#ea4335"/><path d="M18.2 16 L13 25 A12 12 0 0 0 23.5 7.2 H13 Z" fill="#fbbc05"/><path d="M7.8 16 L2.6 7 A12 12 0 0 0 13 25 L18.2 16 Z" fill="#34a853"/><circle cx="13" cy="13" r="5.6" fill="#fff"/><circle cx="13" cy="13" r="4.4" fill="#4285f4"/></svg>
<svg class="b" style="left:207px;top:735px;" width="26" height="26" viewBox="0 0 26 26"><defs><linearGradient id="eg1" x1="0" y1="0" x2="1" y2="1"><stop offset="0" stop-color="#2ec5d3"/><stop offset="0.5" stop-color="#35c1a0"/><stop offset="1" stop-color="#5fd35f"/></linearGradient><linearGradient id="eg2" x1="0" y1="0" x2="0" y2="1"><stop offset="0" stop-color="#1b8ad8"/><stop offset="1" stop-color="#0c59a4"/></linearGradient></defs><path d="M1.5 12 C2 4 9 0.6 14 1 C21 1.4 25 7 24.6 12 C24.4 16 21 17.6 17.6 17.4 C14.6 17.2 14 15.4 15.4 13.6 C16.6 11.4 14.6 8.2 11 8.6 C6 9 2.4 12.4 1.5 12 Z" fill="url(#eg1)"/><path d="M1.5 12 C1 19 6 25 13 25 C17 25 20.6 22.6 22.6 20 C20 21.4 15.4 22 12.4 19 C9.6 16.2 10.4 12.4 12.6 10.6 C13.6 9.6 12.4 8.4 11 8.6 C6 9 2.2 12.6 1.5 12 Z" fill="url(#eg2)"/></svg>
<svg class="b" style="left:255px;top:736px;" width="28" height="24" viewBox="0 0 28 24"><path d="M1.6 3 H9 L11 5 H24 V21 H1.6 Z" fill="#f6c445"/><path d="M1.6 7 H26.4 V22 H1.6 Z" fill="#fbe08a"/><path d="M6 13.6 H22 V22 H17.4 V17.6 H10.6 V22 H6 Z" fill="#3fa9ee"/><rect x="3" y="4" width="4" height="1.2" fill="#5aa0d8"/></svg>
<svg class="b" style="left:305px;top:735px;" width="26" height="26" viewBox="0 0 26 26"><rect x="2" y="5" width="19" height="19" fill="#2e7fc1"/><path d="M6 13 L18 1.6 L24.6 4.6 L13 15.6 Z" fill="#e8e8e8" stroke="#8a8a8a" stroke-width="0.7"/><path d="M6.4 14 L18.4 11.4 L23 17.4 L11.6 21.6 Z" fill="#f4f4f4" stroke="#777" stroke-width="0.7"/><path d="M9 15 L14 13.6 L16 17 L11.4 18.6 Z" fill="#d3219b"/><path d="M11 14.6 L14 13.6 L16 17 L13.6 17.8 Z" fill="#27b24a"/><path d="M9 15 L11 14.4 L12.6 18 L11.4 18.6 Z" fill="#f3c713"/></svg>
<svg class="b" style="left:354px;top:735px;" width="27" height="27" viewBox="0 0 27 27"><path d="M3 15 C3 8.4 9 5 15.4 6 C21.6 7 24.4 11.6 22.6 16.4 C20.8 21 16.6 19 14.6 20.8 C12.6 22.8 13.6 25 10.6 25 C5.6 25 3 20 3 15 Z" fill="#dbeaf6" stroke="#7d9bb5" stroke-width="0.8"/><circle cx="7.6" cy="13.6" r="2" fill="#35a853"/><circle cx="11.8" cy="10" r="2" fill="#e3342f"/><circle cx="17" cy="10.4" r="2" fill="#f5a623"/><circle cx="7.6" cy="19" r="1.6" fill="#8fb5d6"/><path d="M22.2 1.2 L24.6 2.6 L15 22.6 L13 22 Z" fill="#e08a2c"/><path d="M22.4 1 C24 0.4 25.4 1.6 24.6 3 L23 6 L21 5 Z" fill="#f3d9a3"/></svg>
<svg class="b" style="left:404px;top:735px;" width="22" height="27" viewBox="0 0 22 27"><rect x="2" y="1.4" width="18" height="23.6" rx="1.4" fill="#cfe5f7" stroke="#5a9bd4" stroke-width="1"/><rect x="4" y="3.6" width="14" height="6.6" fill="#fff" stroke="#f0a030" stroke-width="0.8"/><circle cx="14.6" cy="7" r="2" fill="none" stroke="#5a9bd4" stroke-width="0.7"/><rect x="4.0" y="12.0" width="2.6" height="2.1" fill="#7fb2de"/><rect x="4.0" y="15.2" width="2.6" height="2.1" fill="#7fb2de"/><rect x="4.0" y="18.4" width="2.6" height="2.1" fill="#7fb2de"/><rect x="4.0" y="21.6" width="2.6" height="2.1" fill="#7fb2de"/><rect x="7.7" y="12.0" width="2.6" height="2.1" fill="#7fb2de"/><rect x="7.7" y="15.2" width="2.6" height="2.1" fill="#7fb2de"/><rect x="7.7" y="18.4" width="2.6" height="2.1" fill="#7fb2de"/><rect x="7.7" y="21.6" width="2.6" height="2.1" fill="#7fb2de"/><rect x="11.4" y="12.0" width="2.6" height="2.1" fill="#7fb2de"/><rect x="11.4" y="15.2" width="2.6" height="2.1" fill="#7fb2de"/><rect x="11.4" y="18.4" width="2.6" height="2.1" fill="#7fb2de"/><rect x="11.4" y="21.6" width="2.6" height="2.1" fill="#7fb2de"/><rect x="15.1" y="12.0" width="2.6" height="2.1" fill="#f0a030"/><rect x="15.1" y="15.2" width="2.6" height="2.1" fill="#f0a030"/><rect x="15.1" y="18.4" width="2.6" height="2.1" fill="#f0a030"/><rect x="15.1" y="21.6" width="2.6" height="2.1" fill="#f0a030"/></svg>
<svg class="b" style="left:451px;top:736px;" width="27" height="25" viewBox="0 0 27 25"><rect x="7" y="1" width="19" height="23" rx="1.4" fill="#21a366"/><rect x="16.5" y="1" width="9.5" height="7.6" fill="#33c481"/><rect x="16.5" y="8.6" width="9.5" height="7.6" fill="#107c41"/><rect x="7" y="8.6" width="9.5" height="7.6" fill="#107c41"/><rect x="7" y="16.2" width="19" height="7.8" fill="#185c37"/><rect x="7" y="1" width="9.5" height="7.6" fill="#21a366"/><rect x="1" y="6" width="13" height="13" rx="1" fill="#107c41"/><path d="M4.4 9 L10.6 16 M10.6 9 L4.4 16" stroke="#fff" stroke-width="1.8"/></svg>
<svg class="b" style="left:500px;top:736px;" width="27" height="25" viewBox="0 0 27 25"><rect x="7" y="1" width="19" height="23" rx="1.4" fill="#41a5ee"/><rect x="7" y="6.8" width="19" height="5.8" fill="#2b7cd3"/><rect x="7" y="12.6" width="19" height="5.8" fill="#185abd"/><rect x="7" y="18.4" width="19" height="5.6" fill="#103f91"/><rect x="1" y="6" width="13" height="13" rx="1" fill="#185abd"/><path d="M3.4 9 L5.4 16 L7.5 10 L9.6 16 L11.6 9" fill="none" stroke="#fff" stroke-width="1.5" stroke-linejoin="round"/></svg>
<svg class="b" style="left:1164px;top:743px;" width="14" height="9" viewBox="0 0 14 9"><path d="M1.4 7.4 L7 1.8 L12.6 7.4" fill="none" stroke="#fff" stroke-width="1.3"/></svg>
<svg class="b" style="left:1185px;top:739px;" width="20" height="18" viewBox="0 0 20 18"><path d="M1.6 6.4 H4.4 L8 3 V15 L4.4 11.6 H1.6 Z" fill="none" stroke="#fff" stroke-width="1.1" stroke-linejoin="round"/><path d="M10.4 6.4 Q12 9 10.4 11.6" fill="none" stroke="#fff" stroke-width="1"/><path d="M12.6 4.6 Q15.4 9 12.6 13.4" fill="none" stroke="#aaa" stroke-width="1"/><path d="M14.8 2.8 Q18.8 9 14.8 15.2" fill="none" stroke="#777" stroke-width="1"/></svg>
<span id="t101" class="t" style="top:740.1px;font-size:11.5px;line-height:16px;color:#fff;left:1219.5px;font-family:'DejaVu Sans','Liberation Sans',sans-serif;transform:scaleX(0.9983);transform-origin:left center;">فا</span>
<span id="t102" class="t" style="top:728.8px;font-size:13.3px;line-height:19px;color:#fff;left:1254.5px;transform:scaleX(0.8278);transform-origin:left center;">7:55 PM</span>
<span id="t103" class="t" style="top:746.1px;font-size:13.3px;line-height:19px;color:#fff;left:1248.7px;transform:scaleX(0.8790);transform-origin:left center;">7/19/2025</span>
<svg class="b" style="left:1318px;top:739px;" width="18" height="17" viewBox="0 0 18 17"><path d="M1 1 H16.6 V12.6 H11 L8.8 15 L6.6 12.6 H1 Z" fill="none" stroke="#fff" stroke-width="1.2"/></svg>
<div class="b" style="left:1354.5px;top:728px;width:1px;height:40px;background:#555;"></div>
</body></html>
